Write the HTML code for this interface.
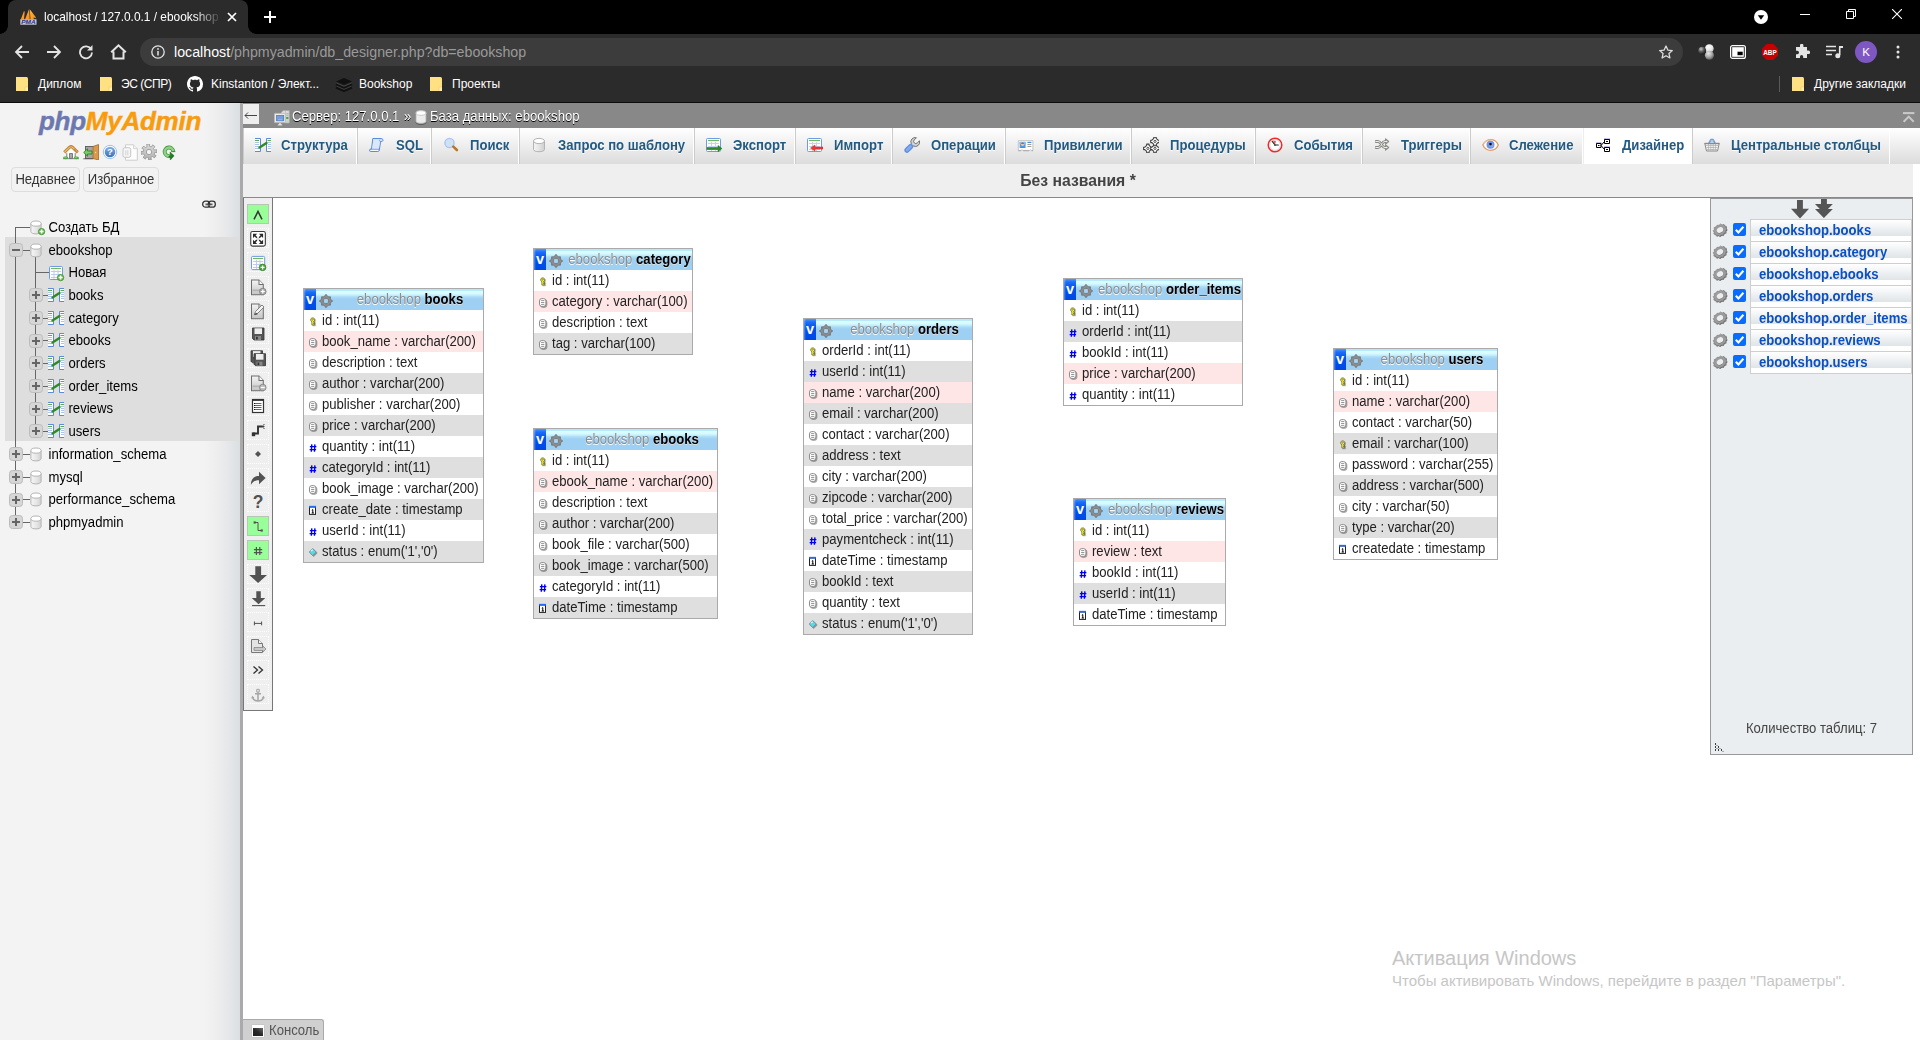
<!DOCTYPE html>
<html lang="ru"><head><meta charset="utf-8"><title>localhost / 127.0.0.1 / ebookshop</title>
<style>
html,body{margin:0;padding:0;width:1920px;height:1040px;overflow:hidden;background:#fff;font-family:"Liberation Sans",sans-serif;font-size:13.12px;color:#444}
*{box-sizing:border-box}
.abs{position:absolute}
svg{display:block}
.t{display:inline-block;line-height:1.1433em;transform:scaleY(1.065);transform-origin:0 .9177em;white-space:nowrap}
/* ---------- browser chrome ---------- */
#chrome{position:absolute;left:0;top:0;width:1920px;height:103px;background:#2b2b2b;color:#fff;font-family:"Liberation Sans",sans-serif;font-size:12px}
#tabstrip{position:absolute;left:0;top:0;width:1920px;height:34px;background:#000}
#tab{position:absolute;left:8px;top:0;width:240px;height:34px;background:#2b2b2b;border-radius:8px 8px 0 0}
#tab:before,#tab:after{content:"";position:absolute;bottom:0;width:8px;height:8px;background:radial-gradient(circle at 0 0,#000 7.5px,#2b2b2b 8px)}
#tab:before{left:-8px}
#tab:after{right:-8px;background:radial-gradient(circle at 100% 0,#000 7.5px,#2b2b2b 8px)}
#tabtitle{position:absolute;left:36px;top:9px;width:180px;height:16px;line-height:16px;white-space:nowrap;overflow:hidden;font-size:11.9px;-webkit-mask-image:linear-gradient(90deg,#000 150px,transparent 178px);mask-image:linear-gradient(90deg,#000 150px,transparent 178px)}
#omni{position:absolute;left:140px;top:38px;width:1543px;height:28px;border-radius:14px;background:#3c3c3c}
#url{position:absolute;left:34px;top:4px;line-height:20px;font-size:14.22px;color:#9a9a9a;white-space:nowrap}
#url b{font-weight:normal;color:#fff}
.bm{position:absolute;top:76px;height:16px;line-height:16px;white-space:nowrap;color:#fff;font-size:12px}
#chromeline{position:absolute;left:0;top:102px;width:1920px;height:1px;background:#0c0c0c}
/* ---------- pma navigation ---------- */
#nav{position:absolute;left:0;top:103px;width:240px;height:937px;background:linear-gradient(90deg,#f3f3f3 0,#f3f3f3 204px,#ededed 218px,#e6e8ea 227px,#dcdfe2 240px);color:#000}
#resizer{position:absolute;left:240px;top:103px;width:3px;height:937px;background:#aaa}
#logo{position:absolute;left:0;top:.5px;width:240px;text-align:center;font-weight:bold;font-style:italic;font-size:26px;line-height:34px;letter-spacing:-.25px;-webkit-text-stroke:.45px currentColor;color:#f89c0e;white-space:nowrap}
#logo span{color:#6c78af;-webkit-text-stroke:.45px #6c78af}
.nbtn{position:absolute;top:64px;height:25px;border:1px solid #ddd;border-radius:4px;background:#f2f2f2;color:#333;line-height:23px;text-align:center;font-size:13.12px}
#hl{position:absolute;left:5px;top:134px;width:235px;height:204px;background:#dedede}
.trow{position:absolute;left:0;height:23px;line-height:22.69px;white-space:nowrap;color:#000;transform:scaleY(1.065);transform-origin:0 15.900px}
.tline{position:absolute;background:#666}
.tbox{position:absolute;width:14px;height:14px;border:1px solid #bcbcbc;border-radius:3.500px;background:#d6d6d6}
.tbox i{position:absolute;left:2px;top:5px;width:8px;height:2px;background:#666}
.tbox b{position:absolute;left:5px;top:2px;width:2px;height:8px;background:#666}
/* ---------- main ---------- */
#serverinfo{position:absolute;left:243px;top:103px;width:1677px;height:25px;background:#888;color:#fff;text-shadow:0 1px 0 #000;white-space:nowrap}
#goback{position:absolute;left:0;top:1px;width:16px;height:20px;background:#eee}
#topmenu{position:absolute;left:243px;top:128px;width:1677px;height:36px;background:linear-gradient(#fff,#dcdcdc);border-bottom:0;white-space:nowrap;font-weight:bold;color:#235a81}
.tab{position:absolute;top:0;height:36px;border-left:1px solid #ccc;border-right:1px solid #fff;background:linear-gradient(#fff,#dcdcdc);text-shadow:0 1px 0 #fff;line-height:15px}
.tab.act{background:#fff;border-left-color:#eee}
.tab svg{position:absolute;left:11px;top:9px}
.tab span{position:absolute;left:37px;top:9.500px;white-space:nowrap;transform:scaleY(1.065);transform-origin:0 12px}
#namepanel{position:absolute;left:243px;top:164px;width:1670px;height:34px;background:#efefef;border-bottom:1px solid #888;text-align:center;font-weight:bold;font-size:15.74px;line-height:33px;color:#444}
/* ---------- designer ---------- */
#sidemenu{position:absolute;left:243px;top:198px;width:30px;height:513px;background:#efefef;border:1px solid #777;border-top:0}
.sb{position:absolute;left:3px;width:22px;height:20px;border:1px dotted #fff}
.sb.on{background:#9f9;border:1px solid #b4c8b4}
.sb svg{position:absolute;left:2px;top:1px;overflow:visible}
.dt{position:absolute;border:1px solid #aaa;background:#fff;color:#222;white-space:nowrap}
.dt .hd{position:relative;height:21px;background:linear-gradient(#b4e7fb 0,#b8eafb 1.500px,#dcfdff 2.200px,#d6faff 4.500px,#c6f0fc 6px,#b0e0f8 7.500px,#a3d5f5 9px,#9dd0f3 10.200px,#9dd0f3 100%);line-height:21px}
.dt .hd .v{position:absolute;left:0;top:0;width:12px;height:21px;background:linear-gradient(90deg,rgba(255,255,255,.35) 0,rgba(255,255,255,0) 2px),linear-gradient(#4f98ff 0,#1c6ef8 3px,#0052ee 9px,#0048e2 100%);color:#fff;font-weight:bold;font-size:14.5px;line-height:20px;text-align:center}
.dt .hd .g{position:absolute;left:15px;top:4.500px}
.dt .hd .nm{position:absolute;left:33px;right:0;top:0;text-align:center;color:#8e8e8e;text-shadow:0 1px 0 #fff;font-size:13.12px;transform:scaleY(1.065);transform-origin:0 15px}
.dt .hd .nm b{color:#000;text-shadow:0 1px 0 #ddd}
.dt .r{position:relative;height:21px;line-height:21px;padding-left:18px}
.dt .r.e{background:#dfdfdf}
.dt .r.p{background:#ffe6e6}
.dt .r svg{position:absolute;left:4px;top:5px}
#layer{position:absolute;left:1710px;top:198px;width:203px;height:557px;background:#eaeef0;border:1px solid #999;color:#444}
.lrow{position:absolute;left:0;width:201px;height:23px}
.lname{position:absolute;left:39px;top:0;width:162px;height:23px;border:1px solid #cfcfcf;background:linear-gradient(#fff 0,#f3f5f6 6px,#dfe4e7 16px,#fff 16.5px,#fff 100%);color:#0b4fc0;font-weight:bold;line-height:21.500px;padding-left:8px;white-space:nowrap;overflow:hidden}
.cb{position:absolute;left:22px;top:4px;width:13px;height:13px;border-radius:2px;background:#0a6cff}
#console{position:absolute;left:243px;top:1019px;width:81px;height:21px;background:#d0d0d0;border:1px solid #aaa;border-bottom:0;border-left:0;border-radius:0 3px 0 0;color:#555;line-height:21px}
#wm1{position:absolute;left:1392px;top:945px;font-size:20px;line-height:26px;color:#c6c6c6;white-space:nowrap}
#wm2{position:absolute;left:1392px;top:971px;font-size:15px;line-height:20px;color:#c6c6c6;white-space:nowrap}
</style></head><body>
<div id="chrome"><div id="tabstrip"></div><div id="tab"><div class="abs" style="left:12px;top:8px"><svg width="17" height="17" viewBox="0 0 17 17" style=""><defs><linearGradient id="sg" x1="0" y1="0" x2="1" y2="1"><stop offset="0" stop-color="#ffb84a"/><stop offset="1" stop-color="#f78a0c"/></linearGradient></defs>
<path d="M.8 11.500L3.900 3.200 4.700 3.500 4 11.500z" fill="url(#sg)"/><path d="M5 11.500L9.200 .8 9.800 11.500z" fill="url(#sg)"/><path d="M9.800 1.500C12.500 4.500 15 8 16.300 10.200L13.500 9.500 14 11.500H10.500z" fill="url(#sg)"/>
<rect x=".3" y="11.300" width="16.200" height="5.400" fill="#c9cbe2"/><text x="8.400" y="16.300" text-anchor="middle" font-family="Liberation Sans,sans-serif" font-size="6.200" font-weight="bold" font-style="italic" fill="#2c3178" textLength="14.500" lengthAdjust="spacingAndGlyphs">PMA</text></svg></div><div id="tabtitle">localhost / 127.0.0.1 / ebookshop</div><div class="abs" style="left:219px;top:12px"><svg width="10" height="10" viewBox="0 0 10 10" style=""><path d="M1 1l8 8M9 1l-8 8" stroke="#fff" stroke-width="1.700"/></svg></div></div><div class="abs" style="left:264px;top:11px"><svg width="12" height="12" viewBox="0 0 12 12" style=""><path d="M6 0v12M0 6h12" stroke="#fff" stroke-width="2"/></svg></div><div class="abs" style="left:1754px;top:10px"><svg width="14" height="14" viewBox="0 0 14 14" style=""><circle cx="7" cy="7" r="7" fill="#fff"/><path d="M3.800 5.300h6.400L7 9.800z" fill="#000"/></svg></div><div class="abs" style="left:1800px;top:14px;width:10px;height:1px;background:#fff"></div><div class="abs" style="left:1846px;top:9px"><svg width="10" height="10" viewBox="0 0 10 10" style=""><path d="M.5 2.500h7v7h-7z" fill="none" stroke="#fff"/><path d="M2.500 2v-1.500h7v7H8" fill="none" stroke="#fff"/></svg></div><div class="abs" style="left:1892px;top:9px"><svg width="10" height="10" viewBox="0 0 10 10" style=""><path d="M0 0l10 10M10 0L0 10" stroke="#fff" stroke-width="1.100"/></svg></div><div class="abs" style="left:14px;top:44px"><svg width="16" height="16" viewBox="0 0 16 16" style=""><path d="M15 8H2.500M8 2L2 8l6 6" fill="none" stroke="#e4e4e4" stroke-width="1.800"/></svg></div><div class="abs" style="left:46px;top:44px"><svg width="16" height="16" viewBox="0 0 16 16" style=""><path d="M1 8h12.500M8 2l6 6-6 6" fill="none" stroke="#e4e4e4" stroke-width="1.800"/></svg></div><div class="abs" style="left:78px;top:44px"><svg width="16" height="16" viewBox="0 0 16 16" style=""><path d="M13.200 5.300A6 6 0 1 0 14 8.500" fill="none" stroke="#e4e4e4" stroke-width="1.800"/><path d="M14.500 1v5.500H9z" fill="#e4e4e4"/></svg></div><div class="abs" style="left:110px;top:43px"><svg width="17" height="17" viewBox="0 0 17 17" style=""><path d="M1.200 9.300L8.500 2.300l7.300 7M3.500 8.500V15.500h10V8.500" fill="none" stroke="#e4e4e4" stroke-width="2"/></svg></div><div id="omni"><div class="abs" style="left:11px;top:7px"><svg width="14" height="14" viewBox="0 0 14 14" style=""><circle cx="7" cy="7" r="6.200" fill="none" stroke="#e4e4e4" stroke-width="1.300"/><path d="M7 6v4.500" stroke="#e4e4e4" stroke-width="1.500"/><circle cx="7" cy="3.900" r=".9" fill="#e4e4e4"/></svg></div><div id="url"><b>localhost</b>/phpmyadmin/db_designer.php?db=ebookshop</div><div class="abs" style="left:1519px;top:7px"><svg width="14" height="14" viewBox="0 0 14 14" style=""><path d="M7 1l1.850 4.100 4.450.45-3.350 3 .95 4.400L7 10.700l-3.900 2.250.95-4.400-3.350-3 4.450-.45z" fill="none" stroke="#dcdcdc" stroke-width="1.300" stroke-linejoin="round"/></svg></div></div><div class="abs" style="left:1697px;top:43px"><svg width="18" height="18" viewBox="0 0 18 18" style=""><defs><radialGradient id="m1" cx=".35" cy=".3" r=".8"><stop offset="0" stop-color="#c4c4c4"/><stop offset=".45" stop-color="#5a5a5a"/><stop offset="1" stop-color="#0c0c0c"/></radialGradient><radialGradient id="m2" cx=".4" cy=".3" r=".8"><stop offset="0" stop-color="#fff"/><stop offset=".6" stop-color="#e4e4e4"/><stop offset="1" stop-color="#9a9a9a"/></radialGradient><radialGradient id="m3" cx=".4" cy=".3" r=".8"><stop offset="0" stop-color="#e8e8e8"/><stop offset=".5" stop-color="#a8a8a8"/><stop offset="1" stop-color="#484848"/></radialGradient></defs>
<circle cx="12.300" cy="5.600" r="4.400" fill="url(#m2)"/><circle cx="5.200" cy="7.600" r="3.900" fill="url(#m1)"/><circle cx="12.400" cy="12.300" r="4.500" fill="url(#m3)"/></svg></div><div class="abs" style="left:1730px;top:45px"><svg width="16" height="14" viewBox="0 0 16 14" style=""><rect x=".6" y=".6" width="14.800" height="12.800" rx="2" fill="none" stroke="#fff" stroke-width="1.200"/><rect x="2.200" y="2.200" width="11.600" height="9.600" fill="#fff"/><rect x="7.500" y="6.700" width="5.200" height="3.500" fill="#000"/></svg></div><div class="abs" style="left:1762px;top:44px"><svg width="16" height="16" viewBox="0 0 16 16" style=""><path d="M4.700 0h6.600L16 4.700v6.600L11.300 16H4.700L0 11.300V4.700z" fill="#c80000"/><text x="8" y="10.500" text-anchor="middle" font-family="Liberation Sans,sans-serif" font-size="7" textLength="13.500" lengthAdjust="spacingAndGlyphs" font-weight="bold" fill="#fff">ABP</text></svg></div><div class="abs" style="left:1794px;top:44px"><svg width="16" height="16" viewBox="0 0 16 16" style=""><path d="M6 1.500a1.700 1.700 0 0 1 3.400 0V3H13v3.600h1.300a1.750 1.750 0 0 1 0 3.500H13V14H9.200v-1.300a1.600 1.600 0 0 0-3.200 0V14H2V10.200h1.300a1.700 1.700 0 0 0 0-3.400H2V3h4z" fill="#e4e4e4"/></svg></div><div class="abs" style="left:1826px;top:45px"><svg width="17" height="14" viewBox="0 0 17 14" style=""><path d="M0 1.500h10M0 5.500h10M0 9.500h6" stroke="#e4e4e4" stroke-width="1.700"/><path d="M13.700 1.500v8.500" stroke="#e4e4e4" stroke-width="1.600"/><path d="M13 1h4v2h-4z" fill="#e4e4e4"/><circle cx="11.800" cy="10.800" r="2.500" fill="#e4e4e4"/></svg></div><div class="abs" style="left:1855px;top:41px"><svg width="22" height="22" viewBox="0 0 22 22" style=""><circle cx="11" cy="11" r="11" fill="#7e57c2"/><text x="11" y="15" text-anchor="middle" font-family="Liberation Sans,sans-serif" font-size="11.500" fill="#fff">K</text></svg></div><div class="abs" style="left:1896px;top:45px"><svg width="4" height="14" viewBox="0 0 4 14" style=""><circle cx="2" cy="2" r="1.500" fill="#e4e4e4"/><circle cx="2" cy="7" r="1.500" fill="#e4e4e4"/><circle cx="2" cy="12" r="1.500" fill="#e4e4e4"/></svg></div><div class="abs" style="left:13px;top:76px"><svg width="16" height="16" viewBox="0 0 16 16" style=""><path d="M3 1h10.500a1.500 1.500 0 0 1 1.500 1.500V15H3z" fill="#ffe082"/><path d="M12 11h3v4h-3z" fill="#ffecb3"/><path d="M12 11h3M12 11v4" stroke="#f5c95a" stroke-width=".6" fill="none"/></svg></div><div class="bm" style="left:38px">Диплом</div><div class="abs" style="left:97px;top:76px"><svg width="16" height="16" viewBox="0 0 16 16" style=""><path d="M3 1h10.500a1.500 1.500 0 0 1 1.500 1.500V15H3z" fill="#ffe082"/><path d="M12 11h3v4h-3z" fill="#ffecb3"/><path d="M12 11h3M12 11v4" stroke="#f5c95a" stroke-width=".6" fill="none"/></svg></div><div class="bm" style="left:121px;letter-spacing:-.45px">ЭС (СПР)</div><div class="abs" style="left:187px;top:76px"><svg width="16" height="16" viewBox="0 0 16 16" style=""><path fill="#fff" d="M8 0C3.580 0 0 3.580 0 8c0 3.540 2.290 6.530 5.470 7.590.4.070.55-.17.550-.38 0-.19-.01-.82-.01-1.490-2.010.37-2.530-.49-2.690-.94-.09-.23-.48-.94-.82-1.130-.28-.15-.68-.52-.01-.53.630-.01 1.080.58 1.230.82.720 1.210 1.870.87 2.330.66.070-.52.280-.87.510-1.070-1.780-.2-3.640-.89-3.640-3.950 0-.87.310-1.590.82-2.150-.08-.2-.36-1.020.08-2.120 0 0 .67-.21 2.200.82.640-.18 1.320-.27 2-.27s1.360.09 2 .27c1.530-1.040 2.200-.82 2.200-.82.440 1.100.16 1.920.08 2.120.51.560.82 1.270.82 2.150 0 3.070-1.870 3.750-3.650 3.950.29.250.54.730.54 1.480 0 1.070-.01 1.930-.01 2.200 0 .21.150.46.550.38A8.013 8.013 0 0 0 16 8c0-4.420-3.580-8-8-8z"/></svg></div><div class="bm" style="left:211px">Kinstanton / Элект...</div><div class="abs" style="left:335px;top:76px"><svg width="18" height="16" viewBox="0 0 18 16" style=""><path d="M1 5.500L9 2l8 3.500-8 3.500z" fill="#111"/><path d="M1 8.500L9 12l8-3.500M1 11.500L9 15l8-3.500" fill="none" stroke="#111" stroke-width="2.200"/><path d="M1.500 7L9 10.300 16.500 7M1.500 10L9 13.300 16.500 10" fill="none" stroke="#555" stroke-width=".6"/></svg></div><div class="bm" style="left:359px">Bookshop</div><div class="abs" style="left:427px;top:76px"><svg width="16" height="16" viewBox="0 0 16 16" style=""><path d="M3 1h10.500a1.500 1.500 0 0 1 1.500 1.500V15H3z" fill="#ffe082"/><path d="M12 11h3v4h-3z" fill="#ffecb3"/><path d="M12 11h3M12 11v4" stroke="#f5c95a" stroke-width=".6" fill="none"/></svg></div><div class="bm" style="left:452px">Проекты</div><div class="abs" style="left:1779px;top:76px;width:1px;height:16px;background:#5a5a5a"></div><div class="abs" style="left:1789px;top:76px"><svg width="16" height="16" viewBox="0 0 16 16" style=""><path d="M3 1h10.500a1.500 1.500 0 0 1 1.500 1.500V15H3z" fill="#ffe082"/><path d="M12 11h3v4h-3z" fill="#ffecb3"/><path d="M12 11h3M12 11v4" stroke="#f5c95a" stroke-width=".6" fill="none"/></svg></div><div class="bm" style="left:1814px">Другие закладки</div><div id="chromeline"></div></div><div id="nav"><div id="logo"><span>php</span>MyAdmin</div><div class="abs" style="left:63px;top:41px"><svg width="16" height="16" viewBox="0 0 16 16" style=""><path d="M3.800 8v6.200h8.400V8L8 4.200z" fill="#fff"/><path d="M3.800 9.200v4.500M12.200 9.200v4.500" stroke="#6e6e6e" stroke-width=".9"/><rect x="6.600" y="9.600" width="2.800" height="4.700" fill="#a9a9a9" stroke="#666" stroke-width=".8"/><path d="M1.300 8.300L6.600 3.200Q8 2 9.400 3.200L14.700 8.300" fill="none" stroke="#c2812f" stroke-width="3.100" stroke-linejoin="round"/><path d="M1.600 8L6.800 3.200Q8 2.200 9.200 3.200L14.400 8" fill="none" stroke="#e8c088" stroke-width="1.100"/><path d="M11 5l3.700 3.300" stroke="#a8621f" stroke-width="1" opacity=".6"/><path d="M0 14.700h16" stroke="#6a6a6a" stroke-width=".8"/><ellipse cx="2.700" cy="13.800" rx="2.600" ry="1.400" fill="#4ea83e"/><ellipse cx="13.300" cy="13.800" rx="2.600" ry="1.400" fill="#4ea83e"/><ellipse cx="2.500" cy="13.400" rx="1.600" ry=".7" fill="#76c765"/><ellipse cx="13" cy="13.400" rx="1.600" ry=".7" fill="#76c765"/></svg></div><div class="abs" style="left:83px;top:41px"><svg width="16" height="16" viewBox="0 0 16 16" style=""><rect x="2.500" y="2.500" width="8" height="12" fill="#a6a4a8" stroke="#5a5a5a" stroke-width=".9"/><path d="M.3 14.800h10" stroke="#5a5a5a" stroke-width=".9"/><path d="M10 2.500l5.500-2v15.500l-5.500-1.500z" fill="#d79a4e" stroke="#a86a22" stroke-width=".8"/><circle cx="12.500" cy="8.500" r=".7" fill="#ffe36a"/><path d="M9 7h-4.500V4.800L.7 8.500l3.800 3.700V10H9z" fill="#7dca6c" stroke="#2e8424" stroke-width=".9"/></svg></div><div class="abs" style="left:102px;top:41px"><svg width="16" height="16" viewBox="0 0 16 16" style=""><defs><linearGradient id="hg" x1="0" y1="0" x2="0" y2="1"><stop offset="0" stop-color="#82b0e6"/><stop offset="1" stop-color="#3c6fb4"/></linearGradient></defs><circle cx="8" cy="8" r="6.700" fill="#fff" stroke="#9dc0ee" stroke-width="1"/><circle cx="8" cy="8" r="5.300" fill="url(#hg)"/><text x="8" y="11.300" text-anchor="middle" font-family="Liberation Sans,sans-serif" font-weight="bold" font-size="9.500" fill="#fff">?</text></svg></div><div class="abs" style="left:122px;top:41px"><svg width="17" height="17" viewBox="0 0 17 17" style=""><path d="M3.500 .8h8l3.800 3.800v11.600H3.500z" fill="#fdfdfd" stroke="#cdcdcd"/><path d="M11.500 .8v3.800h3.800" fill="#f2f2f2" stroke="#d6d6d6"/><rect x="1" y="3.700" width="7.700" height="9.600" rx="1.800" fill="#f6f6f6" stroke="#c6c6c6"/><path d="M3.800 6.200v5M5.800 6.200v5" stroke="#d6d6d6" stroke-width="1.100"/></svg></div><div class="abs" style="left:141px;top:41px"><svg width="16" height="16" viewBox="0 0 16 16" style=""><defs><linearGradient id="gg" x1="0" y1="0" x2="0" y2="1"><stop offset="0" stop-color="#dcdcdc"/><stop offset="1" stop-color="#b0b0b0"/></linearGradient></defs><path d="M15.60 5.51 L15.98 8.59 L13.74 8.44 L13.14 10.59 L15.14 11.62 L13.23 14.06 L11.75 12.37 L9.81 13.47 L10.49 15.60 L7.41 15.98 L7.56 13.74 L5.41 13.14 L4.38 15.14 L1.94 13.23 L3.63 11.75 L2.53 9.81 L0.40 10.49 L0.02 7.41 L2.26 7.56 L2.86 5.41 L0.86 4.38 L2.77 1.94 L4.25 3.63 L6.19 2.53 L5.51 0.40 L8.59 0.02 L8.44 2.26 L10.59 2.86 L11.62 0.86 L14.06 2.77 L12.37 4.25 L13.47 6.19Z" fill="url(#gg)" stroke="#8d8d8d" stroke-width=".7"/><circle cx="8" cy="8" r="2.700" fill="#f3f3f3" stroke="#909090" stroke-width=".8"/></svg></div><div class="abs" style="left:161px;top:41px"><svg width="16" height="16" viewBox="0 0 16 16" style=""><path d="M12.280 7.430A4.300 4.300 0 1 0 9.110 11.950" fill="none" stroke="#3f9c3a" stroke-width="3.900"/><path d="M12.280 7.430A4.300 4.300 0 1 0 9.110 11.950" fill="none" stroke="#93d08a" stroke-width="2.300"/><path d="M10.300 7.600h4" stroke="#2a8428" stroke-width=".9"/><path d="M9 7.900l4.100 3.900-3.700 4.100-.3-2.600-1.500-.6 1.700-1.500z" fill="#1f7d22" stroke="#136416" stroke-width=".5" stroke-linejoin="round"/></svg></div><div class="nbtn" style="left:11px;width:69px"><span class="t">Недавнее</span></div><div class="nbtn" style="left:83px;width:76px"><span class="t">Избранное</span></div><div class="abs" style="left:202px;top:97px"><svg width="14" height="9" viewBox="0 0 14 9" style=""><rect x=".7" y="1.200" width="7" height="6" rx="2.800" fill="none" stroke="#333" stroke-width="1.300"/><rect x="6.300" y="1.200" width="7" height="6" rx="2.800" fill="none" stroke="#333" stroke-width="1.300"/><path d="M3.500 4.200h7" stroke="#333" stroke-width="1.200"/><path d="M3.500 5.300h7" stroke="#999" stroke-width=".6"/></svg></div><div id="hl"></div><div class="tline" style="left:15px;top:124.0px;width:1px;height:295.0px"></div><div class="tline" style="left:15px;top:124.0px;width:15px;height:1px"></div><div class="tline" style="left:35px;top:153.7px;width:1px;height:174.5px"></div><div class="tline" style="left:35px;top:169.4px;width:14px;height:1px"></div><div class="abs" style="left:30px;top:117px"><svg width="16" height="16" viewBox="0 0 16 16" style=""><defs><linearGradient id="dg" x1="0" x2="1"><stop offset="0" stop-color="#f6f6f6"/><stop offset=".55" stop-color="#e6e6e6"/><stop offset="1" stop-color="#d0d0d0"/></linearGradient></defs><path d="M.9 3.600v8c0 1.500 2.300 2.300 5.100 2.300s5.100-.8 5.100-2.300v-8" fill="url(#dg)" stroke="#b4b4b4"/><ellipse cx="6" cy="3.600" rx="5.100" ry="2.600" fill="#fff" stroke="#b4b4b4"/><circle cx="11.600" cy="11.600" r="3.200" fill="#5fb84c" stroke="#3c922d" stroke-width=".7"/><path d="M9.600 11.600h4M11.600 9.600v4" stroke="#fff" stroke-width="1.500"/></svg></div><div class="trow" style="left:48.5px;top:113.95px">Создать БД</div><div class="tline" style="left:23px;top:146.7px;width:7px;height:1px"></div><div class="tbox" style="left:9px;top:139.9px"><i></i></div><div class="abs" style="left:30px;top:140px"><svg width="16" height="16" viewBox="0 0 16 16" style=""><defs><linearGradient id="dg" x1="0" x2="1"><stop offset="0" stop-color="#f6f6f6"/><stop offset=".55" stop-color="#e6e6e6"/><stop offset="1" stop-color="#d0d0d0"/></linearGradient></defs><path d="M.9 3.600v8c0 1.500 2.300 2.300 5.100 2.300s5.100-.8 5.100-2.300v-8" fill="url(#dg)" stroke="#b4b4b4"/><ellipse cx="6" cy="3.600" rx="5.100" ry="2.600" fill="#fff" stroke="#b4b4b4"/></svg></div><div class="trow" style="left:48.5px;top:136.65px">ebookshop</div><div class="abs" style="left:49px;top:163px"><svg width="16" height="16" viewBox="0 0 16 16" style=""><rect x=".5" y=".5" width="13" height="13" rx="1" fill="#fff" stroke="#6f9be0"/><path d="M2 2.500h10" stroke="#6db95b"/><path d="M2 5.500h10M2 8.500h10M2 11.500h10M5 4v9M9 4v9" stroke="#b9cdf0"/><circle cx="11.600" cy="11.600" r="3.200" fill="#5fb84c" stroke="#3c922d" stroke-width=".7"/><path d="M9.600 11.600h4M11.600 9.600v4" stroke="#fff" stroke-width="1.500"/></svg></div><div class="trow" style="left:68.5px;top:159.34px">Новая</div><div class="tline" style="left:43px;top:192.1px;width:5px;height:1px"></div><div class="tbox" style="left:29px;top:185.3px"><i></i><b></b></div><div class="abs" style="left:48px;top:184px"><svg width="16" height="16" viewBox="0 0 16 16" style=""><path d="M0 1.5h5.5v13H0M16 1.5h-4.5v13H16" fill="#fff" stroke="#5a8ad8" stroke-width="1"/>
<path d="M0 3.5h4M12.5 3.5H16" stroke="#5caa4a"/><path d="M0 5.5h4M0 7.5h4M0 9.5h4M0 11.5h4M13 5.5h3M13 7.5h3M13 9.5h3M13 11.5h3" stroke="#a9c3ee"/>
<path d="M4.5 10.5L11.5 6" stroke="#2f8a24" stroke-width="2.4" stroke-linecap="round"/></svg></div><div class="trow" style="left:68.5px;top:182.03px">books</div><div class="tline" style="left:43px;top:214.8px;width:5px;height:1px"></div><div class="tbox" style="left:29px;top:208.0px"><i></i><b></b></div><div class="abs" style="left:48px;top:207px"><svg width="16" height="16" viewBox="0 0 16 16" style=""><path d="M0 1.5h5.5v13H0M16 1.5h-4.5v13H16" fill="#fff" stroke="#5a8ad8" stroke-width="1"/>
<path d="M0 3.5h4M12.5 3.5H16" stroke="#5caa4a"/><path d="M0 5.5h4M0 7.5h4M0 9.5h4M0 11.5h4M13 5.5h3M13 7.5h3M13 9.5h3M13 11.5h3" stroke="#a9c3ee"/>
<path d="M4.5 10.5L11.5 6" stroke="#2f8a24" stroke-width="2.4" stroke-linecap="round"/></svg></div><div class="trow" style="left:68.5px;top:204.72px">category</div><div class="tline" style="left:43px;top:237.4px;width:5px;height:1px"></div><div class="tbox" style="left:29px;top:230.6px"><i></i><b></b></div><div class="abs" style="left:48px;top:229px"><svg width="16" height="16" viewBox="0 0 16 16" style=""><path d="M0 1.5h5.5v13H0M16 1.5h-4.5v13H16" fill="#fff" stroke="#5a8ad8" stroke-width="1"/>
<path d="M0 3.5h4M12.5 3.5H16" stroke="#5caa4a"/><path d="M0 5.5h4M0 7.5h4M0 9.5h4M0 11.5h4M13 5.5h3M13 7.5h3M13 9.5h3M13 11.5h3" stroke="#a9c3ee"/>
<path d="M4.5 10.5L11.5 6" stroke="#2f8a24" stroke-width="2.4" stroke-linecap="round"/></svg></div><div class="trow" style="left:68.5px;top:227.41px">ebooks</div><div class="tline" style="left:43px;top:260.1px;width:5px;height:1px"></div><div class="tbox" style="left:29px;top:253.3px"><i></i><b></b></div><div class="abs" style="left:48px;top:252px"><svg width="16" height="16" viewBox="0 0 16 16" style=""><path d="M0 1.5h5.5v13H0M16 1.5h-4.5v13H16" fill="#fff" stroke="#5a8ad8" stroke-width="1"/>
<path d="M0 3.5h4M12.5 3.5H16" stroke="#5caa4a"/><path d="M0 5.5h4M0 7.5h4M0 9.5h4M0 11.5h4M13 5.5h3M13 7.5h3M13 9.5h3M13 11.5h3" stroke="#a9c3ee"/>
<path d="M4.5 10.5L11.5 6" stroke="#2f8a24" stroke-width="2.4" stroke-linecap="round"/></svg></div><div class="trow" style="left:68.5px;top:250.09px">orders</div><div class="tline" style="left:43px;top:282.8px;width:5px;height:1px"></div><div class="tbox" style="left:29px;top:276.0px"><i></i><b></b></div><div class="abs" style="left:48px;top:275px"><svg width="16" height="16" viewBox="0 0 16 16" style=""><path d="M0 1.5h5.5v13H0M16 1.5h-4.5v13H16" fill="#fff" stroke="#5a8ad8" stroke-width="1"/>
<path d="M0 3.5h4M12.5 3.5H16" stroke="#5caa4a"/><path d="M0 5.5h4M0 7.5h4M0 9.5h4M0 11.5h4M13 5.5h3M13 7.5h3M13 9.5h3M13 11.5h3" stroke="#a9c3ee"/>
<path d="M4.5 10.5L11.5 6" stroke="#2f8a24" stroke-width="2.4" stroke-linecap="round"/></svg></div><div class="trow" style="left:68.5px;top:272.79px">order_items</div><div class="tline" style="left:43px;top:305.5px;width:5px;height:1px"></div><div class="tbox" style="left:29px;top:298.7px"><i></i><b></b></div><div class="abs" style="left:48px;top:298px"><svg width="16" height="16" viewBox="0 0 16 16" style=""><path d="M0 1.5h5.5v13H0M16 1.5h-4.5v13H16" fill="#fff" stroke="#5a8ad8" stroke-width="1"/>
<path d="M0 3.5h4M12.5 3.5H16" stroke="#5caa4a"/><path d="M0 5.5h4M0 7.5h4M0 9.5h4M0 11.5h4M13 5.5h3M13 7.5h3M13 9.5h3M13 11.5h3" stroke="#a9c3ee"/>
<path d="M4.5 10.5L11.5 6" stroke="#2f8a24" stroke-width="2.4" stroke-linecap="round"/></svg></div><div class="trow" style="left:68.5px;top:295.47px">reviews</div><div class="tline" style="left:43px;top:328.2px;width:5px;height:1px"></div><div class="tbox" style="left:29px;top:321.4px"><i></i><b></b></div><div class="abs" style="left:48px;top:320px"><svg width="16" height="16" viewBox="0 0 16 16" style=""><path d="M0 1.5h5.5v13H0M16 1.5h-4.5v13H16" fill="#fff" stroke="#5a8ad8" stroke-width="1"/>
<path d="M0 3.5h4M12.5 3.5H16" stroke="#5caa4a"/><path d="M0 5.5h4M0 7.5h4M0 9.5h4M0 11.5h4M13 5.5h3M13 7.5h3M13 9.5h3M13 11.5h3" stroke="#a9c3ee"/>
<path d="M4.5 10.5L11.5 6" stroke="#2f8a24" stroke-width="2.4" stroke-linecap="round"/></svg></div><div class="trow" style="left:68.5px;top:318.17px">users</div><div class="tline" style="left:23px;top:350.9px;width:7px;height:1px"></div><div class="tbox" style="left:9px;top:344.1px"><i></i><b></b></div><div class="abs" style="left:30px;top:344px"><svg width="16" height="16" viewBox="0 0 16 16" style=""><defs><linearGradient id="dg" x1="0" x2="1"><stop offset="0" stop-color="#f6f6f6"/><stop offset=".55" stop-color="#e6e6e6"/><stop offset="1" stop-color="#d0d0d0"/></linearGradient></defs><path d="M.9 3.600v8c0 1.500 2.300 2.300 5.100 2.300s5.100-.8 5.100-2.300v-8" fill="url(#dg)" stroke="#b4b4b4"/><ellipse cx="6" cy="3.600" rx="5.100" ry="2.600" fill="#fff" stroke="#b4b4b4"/></svg></div><div class="trow" style="left:48.5px;top:340.85px">information_schema</div><div class="tline" style="left:23px;top:373.6px;width:7px;height:1px"></div><div class="tbox" style="left:9px;top:366.8px"><i></i><b></b></div><div class="abs" style="left:30px;top:367px"><svg width="16" height="16" viewBox="0 0 16 16" style=""><defs><linearGradient id="dg" x1="0" x2="1"><stop offset="0" stop-color="#f6f6f6"/><stop offset=".55" stop-color="#e6e6e6"/><stop offset="1" stop-color="#d0d0d0"/></linearGradient></defs><path d="M.9 3.600v8c0 1.500 2.300 2.300 5.100 2.300s5.100-.8 5.100-2.300v-8" fill="url(#dg)" stroke="#b4b4b4"/><ellipse cx="6" cy="3.600" rx="5.100" ry="2.600" fill="#fff" stroke="#b4b4b4"/></svg></div><div class="trow" style="left:48.5px;top:363.55px">mysql</div><div class="tline" style="left:23px;top:396.3px;width:7px;height:1px"></div><div class="tbox" style="left:9px;top:389.5px"><i></i><b></b></div><div class="abs" style="left:30px;top:389px"><svg width="16" height="16" viewBox="0 0 16 16" style=""><defs><linearGradient id="dg" x1="0" x2="1"><stop offset="0" stop-color="#f6f6f6"/><stop offset=".55" stop-color="#e6e6e6"/><stop offset="1" stop-color="#d0d0d0"/></linearGradient></defs><path d="M.9 3.600v8c0 1.500 2.300 2.300 5.100 2.300s5.100-.8 5.100-2.300v-8" fill="url(#dg)" stroke="#b4b4b4"/><ellipse cx="6" cy="3.600" rx="5.100" ry="2.600" fill="#fff" stroke="#b4b4b4"/></svg></div><div class="trow" style="left:48.5px;top:386.24px">performance_schema</div><div class="tline" style="left:23px;top:419.0px;width:7px;height:1px"></div><div class="tbox" style="left:9px;top:412.2px"><i></i><b></b></div><div class="abs" style="left:30px;top:412px"><svg width="16" height="16" viewBox="0 0 16 16" style=""><defs><linearGradient id="dg" x1="0" x2="1"><stop offset="0" stop-color="#f6f6f6"/><stop offset=".55" stop-color="#e6e6e6"/><stop offset="1" stop-color="#d0d0d0"/></linearGradient></defs><path d="M.9 3.600v8c0 1.500 2.300 2.300 5.100 2.300s5.100-.8 5.100-2.300v-8" fill="url(#dg)" stroke="#b4b4b4"/><ellipse cx="6" cy="3.600" rx="5.100" ry="2.600" fill="#fff" stroke="#b4b4b4"/></svg></div><div class="trow" style="left:48.5px;top:408.93px">phpmyadmin</div></div><div id="resizer"></div><div id="serverinfo"><div id="goback"><div class="abs" style="left:1px;top:7px"><svg width="13" height="9" viewBox="0 0 13 9" style=""><path d="M1 4.500h12M4 1.500L1 4.500l3 3" fill="none" stroke="#444" stroke-width="1"/></svg></div></div><div class="abs" style="left:31px;top:7px"><svg width="16" height="16" viewBox="0 0 16 16" style=""><path d="M6.500 3.500L9 .5h6.300V13H11" fill="#dcdcdc" stroke="#a8a8a8" stroke-width=".8"/><path d="M11.600 1v12" stroke="#bdbdbd" stroke-width=".8"/><path d="M12.300 3.600h2.200M12.300 5.300h2.200" stroke="#a9a9a9" stroke-width=".9"/><rect x="12.200" y="6.900" width="2.200" height="2.200" fill="#3cae2e"/><path d="M12.800 10v2.500M13.900 10v2.500" stroke="#c4c4d4" stroke-width=".7"/>
<rect x=".4" y="3.400" width="11" height="9.200" rx=".6" fill="#ebebeb" stroke="#b9b9b9" stroke-width=".8"/><rect x="2.100" y="5" width="8" height="6.200" fill="#5a82c6"/><rect x="3" y="5.800" width="6.200" height="4.600" fill="#789fd8"/><path d="M4 9.700h4.300" stroke="#a9c3ea" stroke-width=".7"/><path d="M3.800 15.200L6 12.700l2.200 2.500z" fill="#e9e9e9" stroke="#cfcfcf" stroke-width=".5"/></svg></div><div class="abs" style="left:49px;top:5px;line-height:18px"><span class="t">Сервер: 127.0.0.1</span></div><div class="abs" style="left:161px;top:5px;line-height:18px"><span class="t">»</span></div><div class="abs" style="left:172px;top:7px"><svg width="12" height="14" viewBox="0 0 12 14" style="filter:drop-shadow(0 1px 0 #555)"><path d="M1 3v8.500c0 1 2 1.800 5 1.800s5-.8 5-1.800V3" fill="#ececec" stroke="#bdbdbd"/><ellipse cx="6" cy="3" rx="5" ry="2.300" fill="#fff" stroke="#c8c8c8"/></svg></div><div class="abs" style="left:187px;top:5px;line-height:18px"><span class="t">База данных: ebookshop</span></div><div class="abs" style="left:1660px;top:9px"><svg width="12" height="12" viewBox="0 0 12 12" style=""><path d="M0 1.100h11.400" stroke="#c8c8c8" stroke-width="2.100"/><path d="M.7 9.800l5-5.200 5 5.200" fill="none" stroke="#c8c8c8" stroke-width="2"/></svg></div></div><div id="topmenu"><div class="tab" style="left:0px;width:114px"><svg width="16" height="16" viewBox="0 0 16 16" style=""><path d="M0 1.5h5.5v13H0M16 1.5h-4.5v13H16" fill="#fff" stroke="#5a8ad8" stroke-width="1"/>
<path d="M0 3.5h4M12.5 3.5H16" stroke="#5caa4a"/><path d="M0 5.5h4M0 7.5h4M0 9.5h4M0 11.5h4M13 5.5h3M13 7.5h3M13 9.5h3M13 11.5h3" stroke="#a9c3ee"/>
<path d="M4.5 10.5L11.5 6" stroke="#2f8a24" stroke-width="2.4" stroke-linecap="round"/></svg><span>Структура</span></div><div class="tab" style="left:114px;width:74px"><svg width="16" height="16" viewBox="0 0 16 16" style=""><path d="M3.800 1.500h8.400c2.200 0 2.400 3 .3 3h-.9l-1.300 8.600c-.2 1.400-1.200 1.400-2.300 1.400H1.600c-1.600 0-1.500-2.400 0-2.400h.9z" fill="#cfe0f8" stroke="#5b8ad6" stroke-width="1" stroke-linejoin="round"/><path d="M4.600 2.500h6.600l-1.400 9.300H3.200z" fill="#dbe8fb"/><path d="M1.300 12.300h8.200c.5 0 .7.500.6 1.200" fill="none" stroke="#5b8ad6" stroke-width=".9"/><path d="M2 12.800h7.300v1H2z" fill="#fff"/><path d="M11.600 4.500c-1 0-1.300-.9-1-1.700" fill="none" stroke="#5b8ad6" stroke-width=".8"/></svg><span style="left:38px">SQL</span></div><div class="tab" style="left:188px;width:88px"><svg width="16" height="16" viewBox="0 0 16 16" style=""><circle cx="6.5" cy="6" r="4.6" fill="#cfe0f7" stroke="#a9c6ef" stroke-width="1.4"/><path d="M10.3 9.6l3.6 3.4" stroke="#b5772c" stroke-width="2.6" stroke-linecap="round"/></svg><span style="left:38px">Поиск</span></div><div class="tab" style="left:276px;width:175px"><svg width="16" height="16" viewBox="0 0 16 16" style=""><defs><linearGradient id="dbg" x1="0" x2="1"><stop offset="0" stop-color="#f4f4f4"/><stop offset=".5" stop-color="#e4e4e4"/><stop offset="1" stop-color="#cfcfcf"/></linearGradient></defs>
<path d="M2.5 4v8.5c0 1.4 2.5 2.2 5.5 2.2s5.5-.8 5.5-2.2V4" fill="url(#dbg)" stroke="#b4b4b4"/><ellipse cx="8" cy="4" rx="5.5" ry="2.6" fill="#fff" stroke="#b4b4b4"/></svg><span style="left:38px">Запрос по шаблону</span></div><div class="tab" style="left:451px;width:101px"><svg width="16" height="16" viewBox="0 0 16 16" style=""><rect x=".5" y="1.5" width="14" height="13" rx="1" fill="#fff" stroke="#6f9be0"/><path d="M2 3.5h11" stroke="#6db95b"/><path d="M2 6.5h11M2 9.5h11M2 12.5h11M5.5 5v9M9.5 5v9" stroke="#c3d4f2"/>
<path d="M1 10.5h11v-2l4 3-4 3v-2H1z" fill="#2e8b2a" stroke="#1f6b1c" stroke-width=".5"/></svg><span style="left:38px">Экспорт</span></div><div class="tab" style="left:552px;width:97px"><svg width="16" height="16" viewBox="0 0 16 16" style=""><rect x=".5" y="1.5" width="14" height="13" rx="1" fill="#fff" stroke="#6f9be0"/><path d="M2 3.5h11" stroke="#6db95b"/><path d="M2 6.5h11M2 9.5h11M2 12.5h11M5.5 5v9M9.5 5v9" stroke="#c3d4f2"/>
<path d="M16 10h-8v-2l-4.5 3 4.5 3v-2h8z" fill="#f03a3a" stroke="#d01c1c" stroke-width=".5"/></svg><span style="left:38px">Импорт</span></div><div class="tab" style="left:649px;width:113px"><svg width="16" height="16" viewBox="0 0 16 16" style=""><path d="M12.400 .75L10.300 2.850a1.900 1.900 0 0 0 3 3.050L15.450 3.800A4.300 4.300 0 0 1 9.200 8.900L7.200 10.900 5.200 8.900 7.300 6.800A4.300 4.300 0 0 1 12.400 .75z" fill="#d2d2d2" stroke="#666" stroke-width=".9" stroke-linejoin="round"/>
<path d="M3 13.200L6.600 9.600" stroke="#5d8ee0" stroke-width="5.200" stroke-linecap="round"/><path d="M3.100 13.100L6.500 9.700" stroke="#8eb2ee" stroke-width="2.600" stroke-linecap="round"/><path d="M3.200 13L6.400 9.800" stroke="#7ea6ea" stroke-width="1.200" stroke-linecap="round"/></svg><span style="left:38px">Операции</span></div><div class="tab" style="left:762px;width:126px"><svg width="17" height="16" viewBox="0 0 17 16" style=""><path d="M1.300 3.700h14.600v9.700h-1.600q-.9-1.300-1.800 0H5.900q-.9-1.300-1.800 0H1.300z" fill="#fff" stroke="#bdbdbd" stroke-width=".9"/><path d="M1.300 13.800h2.500M6.200 13.800h6M14.600 13.800h1.300" stroke="#9a9a9a" stroke-width=".7"/>
<rect x="2.600" y="4.900" width="6" height="6.100" fill="#4d9df0"/><rect x="2.600" y="4.900" width="6" height="2" fill="#7fc0ff"/><circle cx="5.600" cy="7.300" r="1.700" fill="#f3c49a"/><path d="M3.900 6.700q1.700-2.300 3.400 0z" fill="#8a4f1c"/><path d="M3 11q2.600-2.600 5.200 0z" fill="#3f8fe8"/>
<path d="M10.400 5.400h4" stroke="#3d86dc" stroke-width="1.100"/><path d="M10.400 7.500h4M10.400 9.500h4" stroke="#9d9d9d" stroke-width="1.100"/></svg><span style="left:38px">Привилегии</span></div><div class="tab" style="left:888px;width:124px"><svg width="16" height="16" viewBox="0 0 16 16" style=""><g transform="translate(4.9 11.4)"><path d="M-1.200-4.300h2.400v1.300l1.800 1.800h1.300v2.400h-1.300l-1.800 1.800v1.300h-2.400v-1.300l-1.800-1.800h-1.300v-2.400h1.300l1.800-1.800z" fill="#fff" stroke="#3d3d3d" stroke-width="1.050" stroke-linejoin="round"/><circle r="1.100" fill="#fff" stroke="#3d3d3d" stroke-width=".9"/></g><g transform="translate(12 11.4)"><path d="M-1.200-4.300h2.400v1.300l1.800 1.800h1.300v2.400h-1.300l-1.800 1.800v1.300h-2.400v-1.300l-1.800-1.800h-1.300v-2.400h1.300l1.800-1.800z" fill="#fff" stroke="#3d3d3d" stroke-width="1.050" stroke-linejoin="round"/><circle r="1.100" fill="#fff" stroke="#3d3d3d" stroke-width=".9"/></g><g transform="translate(12 4.4)"><path d="M-1.200-4.300h2.400v1.300l1.800 1.800h1.300v2.400h-1.300l-1.800 1.800v1.300h-2.400v-1.300l-1.800-1.800h-1.300v-2.400h1.300l1.800-1.800z" fill="#fff" stroke="#3d3d3d" stroke-width="1.050" stroke-linejoin="round"/><circle r="1.100" fill="#fff" stroke="#3d3d3d" stroke-width=".9"/></g></svg><span style="left:38px">Процедуры</span></div><div class="tab" style="left:1012px;width:107px"><svg width="16" height="16" viewBox="0 0 16 16" style=""><circle cx="8" cy="8" r="6.800" fill="#fff" stroke="#ee2a2a" stroke-width="1.500"/><circle cx="8" cy="8" r="5.300" fill="none" stroke="#cfcfcf" stroke-width=".8"/>
<path d="M8 8L5.800 3.500L9 4z" fill="#f25a5a"/><path d="M8 8L5.300 4.500M8 8h3.300" stroke="#222" stroke-width="1.200" stroke-linecap="round"/><circle cx="8" cy="8" r="1" fill="#555"/></svg><span style="left:38px">События</span></div><div class="tab" style="left:1119px;width:108px"><svg width="16" height="16" viewBox="0 0 16 16" style=""><path d="M1.200 4.500h2.800c3.200 0 3.800 6 7 6h2M1.200 10.500h2.800c3.200 0 3.800-6 7-6h2" fill="none" stroke="#868a82" stroke-width="2.800"/><path d="M11.500 1.600l3.600 2.900-3.600 2.900zM11.500 7.600l3.600 2.900-3.600 2.900z" fill="#868a82" stroke="#868a82" stroke-width=".8" stroke-linejoin="round"/>
<path d="M1.600 4.500h2.400c3.200 0 3.800 6 7 6h2M1.600 10.500h2.400c3.200 0 3.800-6 7-6h2" fill="none" stroke="#f0f0ec" stroke-width="1"/><path d="M12.300 3.400l1.500 1.100-1.500 1.100zM12.300 9.400l1.500 1.100-1.500 1.100z" fill="#f0f0ec"/></svg><span style="left:38px">Триггеры</span></div><div class="tab" style="left:1227px;width:113px"><svg width="17" height="16" viewBox="0 0 17 16" style=""><path d="M.8 8C3 3.700 6 2.700 8.800 2.700S14.600 4 16.300 8C14.500 12 11.500 13.300 8.700 13.300S2.800 12 .8 8z" fill="#fff" stroke="#e09a68" stroke-width="1.300"/><path d="M1.600 6.600C4 3.600 6.500 3.200 9 3.200" fill="none" stroke="#ecc29f" stroke-width="1.300"/><circle cx="8.500" cy="7.700" r="4" fill="#6d95e4"/><circle cx="9.300" cy="8.200" r="2.200" fill="#8db0f0" opacity=".7"/><rect x="7.400" y="6" width="2.200" height="2.200" rx=".4" fill="#000"/></svg><span style="left:38px">Слежение</span></div><div class="tab act" style="left:1340px;width:109px"><svg width="16" height="16" viewBox="0 0 16 16" style=""><path d="M9 1.500h6v1.500H9zM1 5.500h5.500V7H1zM9 9.500h6V11H9z" fill="#8e8ed6"/>
<path d="M9.500 2.500h5v4h-5zM1.500 6.500h4.500v4H1.500zM9.500 10.500h5v4h-5z" fill="#fff" stroke="#000" stroke-width="1"/><path d="M11 4.500h2M3 8.500h1.500M11 12.500h2" stroke="#000" stroke-width="1"/>
<path d="M6 8.500L9.500 4.500M6 8.500l3.500 4" stroke="#000" stroke-width="1" fill="none"/></svg><span style="left:38px">Дизайнер</span></div><div class="tab" style="left:1449px;width:197.5px"><svg width="16" height="16" viewBox="0 0 16 16" style=""><path d="M5 6L7 2.500h2L11 6" fill="none" stroke="#6f9be0" stroke-width="1.600"/><path d="M6.500 3.500l3 2M9.500 3.500l-3 2" stroke="#9fc0f0" stroke-width=".8"/>
<path d="M.8 6.500h14.400l-1.700 7.500h-11z" fill="#f4f4f4" stroke="#8a8a8a"/><path d="M2 8.500h12M2.500 10.500h11M3 12.500h10M4.500 7v7M6.800 7v7M9.200 7v7M11.500 7v7" stroke="#b4b4b4" stroke-width=".8"/><path d="M.5 6.500h15" stroke="#8a8a8a" stroke-width="1.400"/></svg><span style="left:38px">Центральные столбцы</span></div></div><div id="namepanel"><span class="t">Без названия *</span></div><div id="sidemenu"><div class="sb on" style="top:6px"><svg width="16" height="16" viewBox="0 0 16 16" style=""><path d="M4 13.300L8 5.500l4 7.800" fill="none" stroke="#333" stroke-width="1.500"/></svg></div><div class="sb " style="top:30px"><svg width="16" height="16" viewBox="0 0 16 16" style=""><rect x=".75" y="1.550" width="14.600" height="14.600" rx="1.800" fill="#fff" stroke="#3a3a3a" stroke-width="1.100"/><path d="M3 3.800h4.200L3 8zM13.100 3.800V8L8.900 3.800zM3 13.900V9.700l4.200 4.200zM13.100 13.900H8.900l4.200-4.200z" fill="#2a2a2a"/><path d="M4.200 5l2.700 2.700M11.900 5L9.200 7.700M4.200 12.700l2.700-2.700M11.900 12.700L9.200 10" stroke="#2a2a2a" stroke-width="1.500"/><rect x="7" y="7.800" width="2.100" height="2.100" fill="#bbb" opacity=".6"/></svg></div><div class="sb " style="top:54px"><svg width="16" height="16" viewBox="0 0 16 16" style=""><rect x="1.500" y="2.400" width="13.200" height="13.200" rx="1.200" fill="#fff" stroke="#6f9be0"/><path d="M3 4.500h10.200" stroke="#6db95b"/><path d="M3 7.500h10.200M3 10.500h10.200M3 13.500h10.200M6.500 6v9M10 6v9" stroke="#b9cdf0"/><g transform="translate(.1 .9)"><circle cx="12.500" cy="12.500" r="3.300" fill="#4fa83d" stroke="#2f7d22" stroke-width=".7"/><path d="M10.500 12.500h4M12.500 10.500v4" stroke="#fff" stroke-width="1.200"/></g></svg></div><div class="sb " style="top:78px"><svg width="16" height="16" viewBox="0 0 16 16" style=""><g transform="translate(-.5 1.100) scale(1 1.040)"><defs><linearGradient id="pg" x1="0" y1="0" x2="0" y2="1"><stop offset="0" stop-color="#f4f4f4"/><stop offset="1" stop-color="#c4c4c4"/></linearGradient></defs><path d="M2 .8h7.500l4.300 4.300V15H2z" fill="url(#pg)" stroke="#6e6e6e" stroke-width="1"/><path d="M9.500 .8v4.300h4.300" fill="#fafafa" stroke="#6e6e6e" stroke-width="1" stroke-linejoin="round"/></g><path d="M2.500 12.300h9" stroke="#b4b4b4" stroke-width="1.700"/><g transform="translate(.3 1)"><circle cx="12.500" cy="12.500" r="3.300" fill="#aaa" stroke="#777" stroke-width=".7"/><path d="M10.500 12.500h4M12.500 10.500v4" stroke="#fff" stroke-width="1.200"/></g></svg></div><div class="sb " style="top:102px"><svg width="16" height="16" viewBox="0 0 16 16" style=""><g transform="translate(-.5 1.100) scale(1 1.040)"><defs><linearGradient id="pg" x1="0" y1="0" x2="0" y2="1"><stop offset="0" stop-color="#f4f4f4"/><stop offset="1" stop-color="#c4c4c4"/></linearGradient></defs><path d="M2 .8h7.500l4.300 4.300V15H2z" fill="url(#pg)" stroke="#6e6e6e" stroke-width="1"/><path d="M9.500 .8v4.300h4.300" fill="#fafafa" stroke="#6e6e6e" stroke-width="1" stroke-linejoin="round"/></g><path d="M4.500 12.500l1-3 6.500-6.500 2 2-6.500 6.500z" fill="#f4f4f4" stroke="#777" stroke-width=".9"/><path d="M4.500 12.500l3-1" stroke="#555" stroke-width="1.600"/></svg></div><div class="sb " style="top:126px"><svg width="16" height="16" viewBox="0 0 16 16" style=""><g transform="translate(2,1.5)"><path d="M.5 .5h11.500v12H2L.5 11z" fill="#555" stroke="#333" stroke-width=".8"/><rect x="2.500" y=".8" width="7.500" height="5.700" fill="#eee"/><rect x="3" y="8.500" width="6" height="4" fill="#888"/><rect x="4" y="9.300" width="1.800" height="2.700" fill="#333"/></g></svg></div><div class="sb " style="top:150px"><svg width="16" height="16" viewBox="0 0 16 16" style=""><g transform="translate(0.5,0.3)"><path d="M.5 .5h11.500v12H2L.5 11z" fill="#555" stroke="#333" stroke-width=".8"/><rect x="2.500" y=".8" width="7.500" height="5.700" fill="#eee"/><rect x="3" y="8.500" width="6" height="4" fill="#888"/><rect x="4" y="9.300" width="1.800" height="2.700" fill="#333"/></g><g transform="translate(3.5,3.2)"><path d="M.5 .5h11.500v12H2L.5 11z" fill="#555" stroke="#333" stroke-width=".8"/><rect x="2.500" y=".8" width="7.500" height="5.700" fill="#eee"/><rect x="3" y="8.500" width="6" height="4" fill="#888"/><rect x="4" y="9.300" width="1.800" height="2.700" fill="#333"/></g></svg></div><div class="sb " style="top:174px"><svg width="16" height="16" viewBox="0 0 16 16" style=""><g transform="translate(-.5 1.100) scale(1 1.040)"><defs><linearGradient id="pg" x1="0" y1="0" x2="0" y2="1"><stop offset="0" stop-color="#f4f4f4"/><stop offset="1" stop-color="#c4c4c4"/></linearGradient></defs><path d="M2 .8h7.500l4.300 4.300V15H2z" fill="url(#pg)" stroke="#6e6e6e" stroke-width="1"/><path d="M9.500 .8v4.300h4.300" fill="#fafafa" stroke="#6e6e6e" stroke-width="1" stroke-linejoin="round"/></g><path d="M2.500 12.300h9" stroke="#b4b4b4" stroke-width="1.700"/><circle cx="12.800" cy="13.500" r="3.300" fill="#bbb" stroke="#777" stroke-width=".7"/><path d="M10.800 13.500h4" stroke="#fff" stroke-width="1.200"/></svg></div><div class="sb " style="top:198px"><svg width="16" height="16" viewBox="0 0 16 16" style=""><rect x="2.500" y="1.500" width="11" height="13" fill="#fff" stroke="#333" stroke-width="1.200"/><path d="M2.500 2h11" stroke="#333" stroke-width="1.800"/><path d="M4.500 5.500h7M4.500 7.500h7M4.500 9.500h7M4.500 11.500h7" stroke="#555" stroke-width=".9"/><path d="M4 5.500h1M4 7.500h1M4 9.500h1M4 11.500h1" stroke="#111"/></svg></div><div class="sb " style="top:222px"><svg width="16" height="16" viewBox="0 0 16 16" style=""><path d="M3.500 13V11.500H8V4.500h4" fill="none" stroke="#333" stroke-width="1.900"/><rect x="1.800" y="10.500" width="3.400" height="3.700" fill="#333"/><path d="M14.500 2l-2.500 2.500 2.500 2.500M12 4.500h2.500" fill="none" stroke="#333" stroke-width=".9"/></svg></div><div class="sb " style="top:246px"><svg width="16" height="16" viewBox="0 0 16 16" style=""><path d="M8 5l3 3-3 3-3-3z" fill="#525252"/></svg></div><div class="sb " style="top:270px"><svg width="16" height="16" viewBox="0 0 16 16" style=""><path d="M.8 15c0-6 3-9 8.200-9V1.800l6.600 6.200L9 14.200V10.300c-4 0-6 1.200-8.200 4.700z" fill="#525252"/></svg></div><div class="sb " style="top:294px"><svg width="16" height="16" viewBox="0 0 16 16" style=""><text x="8" y="14" text-anchor="middle" font-family="Liberation Sans,sans-serif" font-weight="bold" font-size="17.500" fill="#525252">?</text></svg></div><div class="sb on" style="top:318px"><svg width="16" height="16" viewBox="0 0 16 16" style=""><path d="M5 4.500h3v8h3.500" fill="none" stroke="#525252" stroke-width="1"/><rect x="3.600" y="3.400" width="2.200" height="2.200" fill="#525252"/><rect x="10.600" y="11.400" width="2.200" height="2.200" fill="#525252"/></svg></div><div class="sb on" style="top:342px"><svg width="16" height="16" viewBox="0 0 16 16" style=""><path d="M6.400 5.100v8M9.800 5.100v8M3.900 7.600h8.300M3.900 10.700h8.300" stroke="#525252" stroke-width="1.200"/></svg></div><div class="sb " style="top:366px"><svg width="16" height="16" viewBox="0 0 16 16" style=""><path d="M5.300 .2h5.800v8.800h5.900L8.100 17-.75 9h6.050z" fill="#525252"/></svg></div><div class="sb " style="top:390px"><svg width="16" height="16" viewBox="0 0 16 16" style=""><path d="M6.300 1.200h4.500v6.900h4.500L8.550 14.300 1.800 8.100h4.500z" fill="#525252"/><path d="M2 15.600h13.200" stroke="#525252" stroke-width="1.100"/></svg></div><div class="sb " style="top:414px"><svg width="16" height="16" viewBox="0 0 16 16" style=""><path d="M4 9.400h8M4.400 7.500v3.800M11.600 7.500v3.800" stroke="#525252" stroke-width="1"/></svg></div><div class="sb " style="top:438px"><svg width="16" height="16" viewBox="0 0 16 16" style=""><path d="M1.500 1.500h7l4 4v9h-11z" fill="#e4e4e4" stroke="#777"/><path d="M8.500 1.500v4h4" fill="#f6f6f6" stroke="#777"/><path d="M4 9.500h9v-1.500l3 3-3 3V12.500H4z" fill="#c8c8c8" stroke="#888" stroke-width=".8"/></svg></div><div class="sb " style="top:462px"><svg width="16" height="16" viewBox="0 0 16 16" style=""><path d="M3.500 4.500l4 3.500-4 3.500M8.500 4.500l4 3.500-4 3.500" fill="none" stroke="#333" stroke-width="1.300"/></svg></div><div class="sb " style="top:486px"><svg width="16" height="16" viewBox="0 0 16 16" style=""><g transform="translate(0 1.300)"><rect x="6.700" y="2" width="2.600" height="2.800" rx=".9" fill="none" stroke="#a6a6a6" stroke-width="1.100"/><path d="M8 5V13.800M5 6.500h6" stroke="#a6a6a6" stroke-width="1.500"/><path d="M2.500 9.800c.7 2.700 2.800 3.900 5.500 3.900s4.800-1.200 5.500-3.900" fill="none" stroke="#a6a6a6" stroke-width="1.700"/><path d="M1.300 11.300l.9-2.900 2.100 1.900zM14.700 11.300l-.9-2.900-2.100 1.900z" fill="#a6a6a6"/></g></svg></div></div><div class="dt" style="left:303px;top:288px;width:181px"><div class="hd"><div class="v">v</div><div class="g"><svg width="14" height="14" viewBox="0 0 16 16" style=""><path d="M8 .3l2.300 2.900h2.800v2.800L15.700 8l-2.600 2v2.800h-2.800L8 15.700l-2.300-2.900H2.900V10L.3 8l2.600-2V3.200h2.800z" fill="#858585" stroke="#6e6e6e" stroke-width=".8" stroke-linejoin="miter"/><path d="M8 2.500l1.600 2h1.900v1.900L13.500 8l-2 1.600v1.900H9.600L8 13.500l-1.600-2H4.500V9.600L2.500 8l2-1.600V4.500h1.900z" fill="none" stroke="#9a9a9a" stroke-width=".7"/><rect x="5.200" y="5.200" width="5.600" height="5.600" rx="1.500" fill="#a3d3f5" stroke="#6e6e6e" stroke-width=".8"/></svg></div><div class="nm">ebookshop <b>books</b></div></div><div class="r"><svg width="10" height="13" viewBox="0 0 10 13" style=""><g transform="translate(.75 1) scale(.84)" style="filter:drop-shadow(1px 1px .6px rgba(0,0,0,.35))"><path d="M4.600 2.200c1.500 0 2.500 1 2.500 2.300 0 1-.5 1.700-1.300 2v.8h1.300v1.100H5.800v.8h1.300v1.400H3.700V6.600C2.800 6.300 2.200 5.500 2.200 4.500c0-1.300 1-2.300 2.400-2.300z" fill="#fdf94a" stroke="#4c4c14" stroke-width=".75"/><circle cx="4.600" cy="4.200" r=".85" fill="#fff" stroke="#3a3a20" stroke-width=".6"/></g></svg><span class="t">id : int(11)</span></div><div class="r p"><svg width="10" height="13" viewBox="0 0 10 13" style=""><g style="filter:drop-shadow(1px 1px .6px rgba(0,0,0,.35))"><rect x="1.500" y="2.600" width="6.400" height="7.800" rx="2.300" fill="#fff" stroke="#808080" stroke-width=".9"/><path d="M3.100 4.600h3.200M3.100 6.500h3.200M3.100 8.400h3.200" stroke="#8a8a8a" stroke-width=".9"/></g></svg><span class="t">book_name : varchar(200)</span></div><div class="r"><svg width="10" height="13" viewBox="0 0 10 13" style=""><g style="filter:drop-shadow(1px 1px .6px rgba(0,0,0,.35))"><rect x="1.500" y="2.600" width="6.400" height="7.800" rx="2.300" fill="#fff" stroke="#808080" stroke-width=".9"/><path d="M3.100 4.600h3.200M3.100 6.500h3.200M3.100 8.400h3.200" stroke="#8a8a8a" stroke-width=".9"/></g></svg><span class="t">description : text</span></div><div class="r e"><svg width="10" height="13" viewBox="0 0 10 13" style=""><g style="filter:drop-shadow(1px 1px .6px rgba(0,0,0,.35))"><rect x="1.500" y="2.600" width="6.400" height="7.800" rx="2.300" fill="#fff" stroke="#808080" stroke-width=".9"/><path d="M3.100 4.600h3.200M3.100 6.500h3.200M3.100 8.400h3.200" stroke="#8a8a8a" stroke-width=".9"/></g></svg><span class="t">author : varchar(200)</span></div><div class="r"><svg width="10" height="13" viewBox="0 0 10 13" style=""><g style="filter:drop-shadow(1px 1px .6px rgba(0,0,0,.35))"><rect x="1.500" y="2.600" width="6.400" height="7.800" rx="2.300" fill="#fff" stroke="#808080" stroke-width=".9"/><path d="M3.100 4.600h3.200M3.100 6.500h3.200M3.100 8.400h3.200" stroke="#8a8a8a" stroke-width=".9"/></g></svg><span class="t">publisher : varchar(200)</span></div><div class="r e"><svg width="10" height="13" viewBox="0 0 10 13" style=""><g style="filter:drop-shadow(1px 1px .6px rgba(0,0,0,.35))"><rect x="1.500" y="2.600" width="6.400" height="7.800" rx="2.300" fill="#fff" stroke="#808080" stroke-width=".9"/><path d="M3.100 4.600h3.200M3.100 6.500h3.200M3.100 8.400h3.200" stroke="#8a8a8a" stroke-width=".9"/></g></svg><span class="t">price : varchar(200)</span></div><div class="r"><svg width="10" height="13" viewBox="0 0 10 13" style=""><path d="M3.800 3.400L3.300 10.800M6.900 3.400L6.400 10.800M1.900 5.600h6.500M1.600 8.600h6.500" stroke="#0000f0" stroke-width="1.400"/></svg><span class="t">quantity : int(11)</span></div><div class="r e"><svg width="10" height="13" viewBox="0 0 10 13" style=""><path d="M3.800 3.400L3.300 10.800M6.900 3.400L6.400 10.800M1.900 5.600h6.500M1.600 8.600h6.500" stroke="#0000f0" stroke-width="1.400"/></svg><span class="t">categoryId : int(11)</span></div><div class="r"><svg width="10" height="13" viewBox="0 0 10 13" style=""><g style="filter:drop-shadow(1px 1px .6px rgba(0,0,0,.35))"><rect x="1.500" y="2.600" width="6.400" height="7.800" rx="2.300" fill="#fff" stroke="#808080" stroke-width=".9"/><path d="M3.100 4.600h3.200M3.100 6.500h3.200M3.100 8.400h3.200" stroke="#8a8a8a" stroke-width=".9"/></g></svg><span class="t">book_image : varchar(200)</span></div><div class="r e"><svg width="10" height="13" viewBox="0 0 10 13" style=""><rect x="1.500" y="3" width="6" height="7.400" fill="#fff" stroke="#222" stroke-width="1"/><path d="M1 2.700h7" stroke="#2a6af0" stroke-width="1.700"/><path d="M3.800 6.200l1-.6V9M3.700 9h2.200" stroke="#000" stroke-width="1" fill="none"/></svg><span class="t">create_date : timestamp</span></div><div class="r"><svg width="10" height="13" viewBox="0 0 10 13" style=""><path d="M3.800 3.400L3.300 10.800M6.900 3.400L6.400 10.800M1.900 5.600h6.500M1.600 8.600h6.500" stroke="#0000f0" stroke-width="1.400"/></svg><span class="t">userId : int(11)</span></div><div class="r e"><svg width="10" height="13" viewBox="0 0 10 13" style=""><g style="filter:drop-shadow(1px 1px .6px rgba(0,0,0,.35))"><path d="M4.700 2.500l3.500 3.500-3.500 3.500L1.200 6z" fill="#55dbe8" stroke="#6f8a8e" stroke-width=".8"/><path d="M3.200 5.200l1.500-1.500" stroke="#dffbff" stroke-width="1.200"/></g></svg><span class="t">status : enum('1','0')</span></div></div><div class="dt" style="left:533px;top:248px;width:160px"><div class="hd"><div class="v">v</div><div class="g"><svg width="14" height="14" viewBox="0 0 16 16" style=""><path d="M8 .3l2.300 2.900h2.800v2.800L15.700 8l-2.600 2v2.800h-2.800L8 15.700l-2.300-2.900H2.900V10L.3 8l2.600-2V3.200h2.800z" fill="#858585" stroke="#6e6e6e" stroke-width=".8" stroke-linejoin="miter"/><path d="M8 2.500l1.600 2h1.900v1.900L13.500 8l-2 1.600v1.900H9.600L8 13.500l-1.600-2H4.500V9.600L2.500 8l2-1.600V4.500h1.900z" fill="none" stroke="#9a9a9a" stroke-width=".7"/><rect x="5.200" y="5.200" width="5.600" height="5.600" rx="1.500" fill="#a3d3f5" stroke="#6e6e6e" stroke-width=".8"/></svg></div><div class="nm">ebookshop <b>category</b></div></div><div class="r"><svg width="10" height="13" viewBox="0 0 10 13" style=""><g transform="translate(.75 1) scale(.84)" style="filter:drop-shadow(1px 1px .6px rgba(0,0,0,.35))"><path d="M4.600 2.200c1.500 0 2.500 1 2.500 2.300 0 1-.5 1.700-1.300 2v.8h1.300v1.100H5.800v.8h1.300v1.400H3.700V6.600C2.800 6.300 2.200 5.500 2.200 4.500c0-1.300 1-2.300 2.400-2.300z" fill="#fdf94a" stroke="#4c4c14" stroke-width=".75"/><circle cx="4.600" cy="4.200" r=".85" fill="#fff" stroke="#3a3a20" stroke-width=".6"/></g></svg><span class="t">id : int(11)</span></div><div class="r p"><svg width="10" height="13" viewBox="0 0 10 13" style=""><g style="filter:drop-shadow(1px 1px .6px rgba(0,0,0,.35))"><rect x="1.500" y="2.600" width="6.400" height="7.800" rx="2.300" fill="#fff" stroke="#808080" stroke-width=".9"/><path d="M3.100 4.600h3.200M3.100 6.500h3.200M3.100 8.400h3.200" stroke="#8a8a8a" stroke-width=".9"/></g></svg><span class="t">category : varchar(100)</span></div><div class="r"><svg width="10" height="13" viewBox="0 0 10 13" style=""><g style="filter:drop-shadow(1px 1px .6px rgba(0,0,0,.35))"><rect x="1.500" y="2.600" width="6.400" height="7.800" rx="2.300" fill="#fff" stroke="#808080" stroke-width=".9"/><path d="M3.100 4.600h3.200M3.100 6.500h3.200M3.100 8.400h3.200" stroke="#8a8a8a" stroke-width=".9"/></g></svg><span class="t">description : text</span></div><div class="r e"><svg width="10" height="13" viewBox="0 0 10 13" style=""><g style="filter:drop-shadow(1px 1px .6px rgba(0,0,0,.35))"><rect x="1.500" y="2.600" width="6.400" height="7.800" rx="2.300" fill="#fff" stroke="#808080" stroke-width=".9"/><path d="M3.100 4.600h3.200M3.100 6.500h3.200M3.100 8.400h3.200" stroke="#8a8a8a" stroke-width=".9"/></g></svg><span class="t">tag : varchar(100)</span></div></div><div class="dt" style="left:533px;top:428px;width:185px"><div class="hd"><div class="v">v</div><div class="g"><svg width="14" height="14" viewBox="0 0 16 16" style=""><path d="M8 .3l2.300 2.900h2.800v2.800L15.700 8l-2.600 2v2.800h-2.800L8 15.700l-2.300-2.900H2.900V10L.3 8l2.600-2V3.200h2.800z" fill="#858585" stroke="#6e6e6e" stroke-width=".8" stroke-linejoin="miter"/><path d="M8 2.500l1.600 2h1.900v1.900L13.500 8l-2 1.600v1.900H9.600L8 13.500l-1.600-2H4.500V9.600L2.500 8l2-1.600V4.500h1.900z" fill="none" stroke="#9a9a9a" stroke-width=".7"/><rect x="5.200" y="5.200" width="5.600" height="5.600" rx="1.500" fill="#a3d3f5" stroke="#6e6e6e" stroke-width=".8"/></svg></div><div class="nm">ebookshop <b>ebooks</b></div></div><div class="r"><svg width="10" height="13" viewBox="0 0 10 13" style=""><g transform="translate(.75 1) scale(.84)" style="filter:drop-shadow(1px 1px .6px rgba(0,0,0,.35))"><path d="M4.600 2.200c1.500 0 2.500 1 2.500 2.300 0 1-.5 1.700-1.300 2v.8h1.300v1.100H5.800v.8h1.300v1.400H3.700V6.600C2.800 6.300 2.200 5.500 2.200 4.500c0-1.300 1-2.300 2.400-2.300z" fill="#fdf94a" stroke="#4c4c14" stroke-width=".75"/><circle cx="4.600" cy="4.200" r=".85" fill="#fff" stroke="#3a3a20" stroke-width=".6"/></g></svg><span class="t">id : int(11)</span></div><div class="r p"><svg width="10" height="13" viewBox="0 0 10 13" style=""><g style="filter:drop-shadow(1px 1px .6px rgba(0,0,0,.35))"><rect x="1.500" y="2.600" width="6.400" height="7.800" rx="2.300" fill="#fff" stroke="#808080" stroke-width=".9"/><path d="M3.100 4.600h3.200M3.100 6.500h3.200M3.100 8.400h3.200" stroke="#8a8a8a" stroke-width=".9"/></g></svg><span class="t">ebook_name : varchar(200)</span></div><div class="r"><svg width="10" height="13" viewBox="0 0 10 13" style=""><g style="filter:drop-shadow(1px 1px .6px rgba(0,0,0,.35))"><rect x="1.500" y="2.600" width="6.400" height="7.800" rx="2.300" fill="#fff" stroke="#808080" stroke-width=".9"/><path d="M3.100 4.600h3.200M3.100 6.500h3.200M3.100 8.400h3.200" stroke="#8a8a8a" stroke-width=".9"/></g></svg><span class="t">description : text</span></div><div class="r e"><svg width="10" height="13" viewBox="0 0 10 13" style=""><g style="filter:drop-shadow(1px 1px .6px rgba(0,0,0,.35))"><rect x="1.500" y="2.600" width="6.400" height="7.800" rx="2.300" fill="#fff" stroke="#808080" stroke-width=".9"/><path d="M3.100 4.600h3.200M3.100 6.500h3.200M3.100 8.400h3.200" stroke="#8a8a8a" stroke-width=".9"/></g></svg><span class="t">author : varchar(200)</span></div><div class="r"><svg width="10" height="13" viewBox="0 0 10 13" style=""><g style="filter:drop-shadow(1px 1px .6px rgba(0,0,0,.35))"><rect x="1.500" y="2.600" width="6.400" height="7.800" rx="2.300" fill="#fff" stroke="#808080" stroke-width=".9"/><path d="M3.100 4.600h3.200M3.100 6.500h3.200M3.100 8.400h3.200" stroke="#8a8a8a" stroke-width=".9"/></g></svg><span class="t">book_file : varchar(500)</span></div><div class="r e"><svg width="10" height="13" viewBox="0 0 10 13" style=""><g style="filter:drop-shadow(1px 1px .6px rgba(0,0,0,.35))"><rect x="1.500" y="2.600" width="6.400" height="7.800" rx="2.300" fill="#fff" stroke="#808080" stroke-width=".9"/><path d="M3.100 4.600h3.200M3.100 6.500h3.200M3.100 8.400h3.200" stroke="#8a8a8a" stroke-width=".9"/></g></svg><span class="t">book_image : varchar(500)</span></div><div class="r"><svg width="10" height="13" viewBox="0 0 10 13" style=""><path d="M3.800 3.400L3.300 10.800M6.900 3.400L6.400 10.800M1.900 5.600h6.500M1.600 8.600h6.500" stroke="#0000f0" stroke-width="1.400"/></svg><span class="t">categoryId : int(11)</span></div><div class="r e"><svg width="10" height="13" viewBox="0 0 10 13" style=""><rect x="1.500" y="3" width="6" height="7.400" fill="#fff" stroke="#222" stroke-width="1"/><path d="M1 2.700h7" stroke="#2a6af0" stroke-width="1.700"/><path d="M3.800 6.200l1-.6V9M3.700 9h2.200" stroke="#000" stroke-width="1" fill="none"/></svg><span class="t">dateTime : timestamp</span></div></div><div class="dt" style="left:803px;top:318px;width:170px"><div class="hd"><div class="v">v</div><div class="g"><svg width="14" height="14" viewBox="0 0 16 16" style=""><path d="M8 .3l2.300 2.900h2.800v2.800L15.700 8l-2.600 2v2.800h-2.800L8 15.700l-2.300-2.900H2.900V10L.3 8l2.600-2V3.200h2.800z" fill="#858585" stroke="#6e6e6e" stroke-width=".8" stroke-linejoin="miter"/><path d="M8 2.500l1.600 2h1.900v1.900L13.500 8l-2 1.600v1.900H9.600L8 13.500l-1.600-2H4.500V9.600L2.500 8l2-1.600V4.500h1.900z" fill="none" stroke="#9a9a9a" stroke-width=".7"/><rect x="5.200" y="5.200" width="5.600" height="5.600" rx="1.500" fill="#a3d3f5" stroke="#6e6e6e" stroke-width=".8"/></svg></div><div class="nm">ebookshop <b>orders</b></div></div><div class="r"><svg width="10" height="13" viewBox="0 0 10 13" style=""><g transform="translate(.75 1) scale(.84)" style="filter:drop-shadow(1px 1px .6px rgba(0,0,0,.35))"><path d="M4.600 2.200c1.500 0 2.500 1 2.500 2.300 0 1-.5 1.700-1.300 2v.8h1.300v1.100H5.800v.8h1.300v1.400H3.700V6.600C2.800 6.300 2.200 5.500 2.200 4.500c0-1.300 1-2.300 2.400-2.300z" fill="#fdf94a" stroke="#4c4c14" stroke-width=".75"/><circle cx="4.600" cy="4.200" r=".85" fill="#fff" stroke="#3a3a20" stroke-width=".6"/></g></svg><span class="t">orderId : int(11)</span></div><div class="r e"><svg width="10" height="13" viewBox="0 0 10 13" style=""><path d="M3.800 3.400L3.300 10.800M6.900 3.400L6.400 10.800M1.900 5.600h6.500M1.600 8.600h6.500" stroke="#0000f0" stroke-width="1.400"/></svg><span class="t">userId : int(11)</span></div><div class="r p"><svg width="10" height="13" viewBox="0 0 10 13" style=""><g style="filter:drop-shadow(1px 1px .6px rgba(0,0,0,.35))"><rect x="1.500" y="2.600" width="6.400" height="7.800" rx="2.300" fill="#fff" stroke="#808080" stroke-width=".9"/><path d="M3.100 4.600h3.200M3.100 6.500h3.200M3.100 8.400h3.200" stroke="#8a8a8a" stroke-width=".9"/></g></svg><span class="t">name : varchar(200)</span></div><div class="r e"><svg width="10" height="13" viewBox="0 0 10 13" style=""><g style="filter:drop-shadow(1px 1px .6px rgba(0,0,0,.35))"><rect x="1.500" y="2.600" width="6.400" height="7.800" rx="2.300" fill="#fff" stroke="#808080" stroke-width=".9"/><path d="M3.100 4.600h3.200M3.100 6.500h3.200M3.100 8.400h3.200" stroke="#8a8a8a" stroke-width=".9"/></g></svg><span class="t">email : varchar(200)</span></div><div class="r"><svg width="10" height="13" viewBox="0 0 10 13" style=""><g style="filter:drop-shadow(1px 1px .6px rgba(0,0,0,.35))"><rect x="1.500" y="2.600" width="6.400" height="7.800" rx="2.300" fill="#fff" stroke="#808080" stroke-width=".9"/><path d="M3.100 4.600h3.200M3.100 6.500h3.200M3.100 8.400h3.200" stroke="#8a8a8a" stroke-width=".9"/></g></svg><span class="t">contact : varchar(200)</span></div><div class="r e"><svg width="10" height="13" viewBox="0 0 10 13" style=""><g style="filter:drop-shadow(1px 1px .6px rgba(0,0,0,.35))"><rect x="1.500" y="2.600" width="6.400" height="7.800" rx="2.300" fill="#fff" stroke="#808080" stroke-width=".9"/><path d="M3.100 4.600h3.200M3.100 6.500h3.200M3.100 8.400h3.200" stroke="#8a8a8a" stroke-width=".9"/></g></svg><span class="t">address : text</span></div><div class="r"><svg width="10" height="13" viewBox="0 0 10 13" style=""><g style="filter:drop-shadow(1px 1px .6px rgba(0,0,0,.35))"><rect x="1.500" y="2.600" width="6.400" height="7.800" rx="2.300" fill="#fff" stroke="#808080" stroke-width=".9"/><path d="M3.100 4.600h3.200M3.100 6.500h3.200M3.100 8.400h3.200" stroke="#8a8a8a" stroke-width=".9"/></g></svg><span class="t">city : varchar(200)</span></div><div class="r e"><svg width="10" height="13" viewBox="0 0 10 13" style=""><g style="filter:drop-shadow(1px 1px .6px rgba(0,0,0,.35))"><rect x="1.500" y="2.600" width="6.400" height="7.800" rx="2.300" fill="#fff" stroke="#808080" stroke-width=".9"/><path d="M3.100 4.600h3.200M3.100 6.500h3.200M3.100 8.400h3.200" stroke="#8a8a8a" stroke-width=".9"/></g></svg><span class="t">zipcode : varchar(200)</span></div><div class="r"><svg width="10" height="13" viewBox="0 0 10 13" style=""><g style="filter:drop-shadow(1px 1px .6px rgba(0,0,0,.35))"><rect x="1.500" y="2.600" width="6.400" height="7.800" rx="2.300" fill="#fff" stroke="#808080" stroke-width=".9"/><path d="M3.100 4.600h3.200M3.100 6.500h3.200M3.100 8.400h3.200" stroke="#8a8a8a" stroke-width=".9"/></g></svg><span class="t">total_price : varchar(200)</span></div><div class="r e"><svg width="10" height="13" viewBox="0 0 10 13" style=""><path d="M3.800 3.400L3.300 10.800M6.900 3.400L6.400 10.800M1.900 5.600h6.500M1.600 8.600h6.500" stroke="#0000f0" stroke-width="1.400"/></svg><span class="t">paymentcheck : int(11)</span></div><div class="r"><svg width="10" height="13" viewBox="0 0 10 13" style=""><rect x="1.500" y="3" width="6" height="7.400" fill="#fff" stroke="#222" stroke-width="1"/><path d="M1 2.700h7" stroke="#2a6af0" stroke-width="1.700"/><path d="M3.800 6.200l1-.6V9M3.700 9h2.200" stroke="#000" stroke-width="1" fill="none"/></svg><span class="t">dateTime : timestamp</span></div><div class="r e"><svg width="10" height="13" viewBox="0 0 10 13" style=""><g style="filter:drop-shadow(1px 1px .6px rgba(0,0,0,.35))"><rect x="1.500" y="2.600" width="6.400" height="7.800" rx="2.300" fill="#fff" stroke="#808080" stroke-width=".9"/><path d="M3.100 4.600h3.200M3.100 6.500h3.200M3.100 8.400h3.200" stroke="#8a8a8a" stroke-width=".9"/></g></svg><span class="t">bookId : text</span></div><div class="r"><svg width="10" height="13" viewBox="0 0 10 13" style=""><g style="filter:drop-shadow(1px 1px .6px rgba(0,0,0,.35))"><rect x="1.500" y="2.600" width="6.400" height="7.800" rx="2.300" fill="#fff" stroke="#808080" stroke-width=".9"/><path d="M3.100 4.600h3.200M3.100 6.500h3.200M3.100 8.400h3.200" stroke="#8a8a8a" stroke-width=".9"/></g></svg><span class="t">quantity : text</span></div><div class="r e"><svg width="10" height="13" viewBox="0 0 10 13" style=""><g style="filter:drop-shadow(1px 1px .6px rgba(0,0,0,.35))"><path d="M4.700 2.500l3.500 3.500-3.500 3.500L1.200 6z" fill="#55dbe8" stroke="#6f8a8e" stroke-width=".8"/><path d="M3.200 5.200l1.500-1.500" stroke="#dffbff" stroke-width="1.200"/></g></svg><span class="t">status : enum('1','0')</span></div></div><div class="dt" style="left:1063px;top:278px;width:180px"><div class="hd"><div class="v">v</div><div class="g"><svg width="14" height="14" viewBox="0 0 16 16" style=""><path d="M8 .3l2.300 2.900h2.800v2.800L15.700 8l-2.600 2v2.800h-2.800L8 15.700l-2.300-2.900H2.900V10L.3 8l2.600-2V3.200h2.800z" fill="#858585" stroke="#6e6e6e" stroke-width=".8" stroke-linejoin="miter"/><path d="M8 2.500l1.600 2h1.900v1.900L13.500 8l-2 1.600v1.900H9.600L8 13.500l-1.600-2H4.500V9.600L2.500 8l2-1.600V4.500h1.900z" fill="none" stroke="#9a9a9a" stroke-width=".7"/><rect x="5.200" y="5.200" width="5.600" height="5.600" rx="1.500" fill="#a3d3f5" stroke="#6e6e6e" stroke-width=".8"/></svg></div><div class="nm">ebookshop <b>order_items</b></div></div><div class="r"><svg width="10" height="13" viewBox="0 0 10 13" style=""><g transform="translate(.75 1) scale(.84)" style="filter:drop-shadow(1px 1px .6px rgba(0,0,0,.35))"><path d="M4.600 2.200c1.500 0 2.500 1 2.500 2.300 0 1-.5 1.700-1.300 2v.8h1.300v1.100H5.800v.8h1.300v1.400H3.700V6.600C2.800 6.300 2.200 5.500 2.200 4.500c0-1.300 1-2.300 2.400-2.300z" fill="#fdf94a" stroke="#4c4c14" stroke-width=".75"/><circle cx="4.600" cy="4.200" r=".85" fill="#fff" stroke="#3a3a20" stroke-width=".6"/></g></svg><span class="t">id : int(11)</span></div><div class="r e"><svg width="10" height="13" viewBox="0 0 10 13" style=""><path d="M3.800 3.400L3.300 10.800M6.900 3.400L6.400 10.800M1.900 5.600h6.500M1.600 8.600h6.500" stroke="#0000f0" stroke-width="1.400"/></svg><span class="t">orderId : int(11)</span></div><div class="r"><svg width="10" height="13" viewBox="0 0 10 13" style=""><path d="M3.800 3.400L3.300 10.800M6.900 3.400L6.400 10.800M1.900 5.600h6.500M1.600 8.600h6.500" stroke="#0000f0" stroke-width="1.400"/></svg><span class="t">bookId : int(11)</span></div><div class="r p"><svg width="10" height="13" viewBox="0 0 10 13" style=""><g style="filter:drop-shadow(1px 1px .6px rgba(0,0,0,.35))"><rect x="1.500" y="2.600" width="6.400" height="7.800" rx="2.300" fill="#fff" stroke="#808080" stroke-width=".9"/><path d="M3.100 4.600h3.200M3.100 6.500h3.200M3.100 8.400h3.200" stroke="#8a8a8a" stroke-width=".9"/></g></svg><span class="t">price : varchar(200)</span></div><div class="r"><svg width="10" height="13" viewBox="0 0 10 13" style=""><path d="M3.800 3.400L3.300 10.800M6.900 3.400L6.400 10.800M1.900 5.600h6.500M1.600 8.600h6.500" stroke="#0000f0" stroke-width="1.400"/></svg><span class="t">quantity : int(11)</span></div></div><div class="dt" style="left:1073px;top:498px;width:153px"><div class="hd"><div class="v">v</div><div class="g"><svg width="14" height="14" viewBox="0 0 16 16" style=""><path d="M8 .3l2.300 2.900h2.800v2.800L15.700 8l-2.600 2v2.800h-2.800L8 15.700l-2.300-2.900H2.900V10L.3 8l2.600-2V3.200h2.800z" fill="#858585" stroke="#6e6e6e" stroke-width=".8" stroke-linejoin="miter"/><path d="M8 2.500l1.600 2h1.900v1.900L13.500 8l-2 1.600v1.900H9.600L8 13.500l-1.600-2H4.500V9.600L2.500 8l2-1.600V4.500h1.900z" fill="none" stroke="#9a9a9a" stroke-width=".7"/><rect x="5.200" y="5.200" width="5.600" height="5.600" rx="1.500" fill="#a3d3f5" stroke="#6e6e6e" stroke-width=".8"/></svg></div><div class="nm">ebookshop <b>reviews</b></div></div><div class="r"><svg width="10" height="13" viewBox="0 0 10 13" style=""><g transform="translate(.75 1) scale(.84)" style="filter:drop-shadow(1px 1px .6px rgba(0,0,0,.35))"><path d="M4.600 2.200c1.500 0 2.500 1 2.500 2.300 0 1-.5 1.700-1.300 2v.8h1.300v1.100H5.800v.8h1.300v1.400H3.700V6.600C2.800 6.300 2.200 5.500 2.200 4.500c0-1.300 1-2.300 2.400-2.300z" fill="#fdf94a" stroke="#4c4c14" stroke-width=".75"/><circle cx="4.600" cy="4.200" r=".85" fill="#fff" stroke="#3a3a20" stroke-width=".6"/></g></svg><span class="t">id : int(11)</span></div><div class="r p"><svg width="10" height="13" viewBox="0 0 10 13" style=""><g style="filter:drop-shadow(1px 1px .6px rgba(0,0,0,.35))"><rect x="1.500" y="2.600" width="6.400" height="7.800" rx="2.300" fill="#fff" stroke="#808080" stroke-width=".9"/><path d="M3.100 4.600h3.200M3.100 6.500h3.200M3.100 8.400h3.200" stroke="#8a8a8a" stroke-width=".9"/></g></svg><span class="t">review : text</span></div><div class="r"><svg width="10" height="13" viewBox="0 0 10 13" style=""><path d="M3.800 3.400L3.300 10.800M6.900 3.400L6.400 10.800M1.900 5.600h6.500M1.600 8.600h6.500" stroke="#0000f0" stroke-width="1.400"/></svg><span class="t">bookId : int(11)</span></div><div class="r e"><svg width="10" height="13" viewBox="0 0 10 13" style=""><path d="M3.800 3.400L3.300 10.800M6.900 3.400L6.400 10.800M1.900 5.600h6.500M1.600 8.600h6.500" stroke="#0000f0" stroke-width="1.400"/></svg><span class="t">userId : int(11)</span></div><div class="r"><svg width="10" height="13" viewBox="0 0 10 13" style=""><rect x="1.500" y="3" width="6" height="7.400" fill="#fff" stroke="#222" stroke-width="1"/><path d="M1 2.700h7" stroke="#2a6af0" stroke-width="1.700"/><path d="M3.800 6.200l1-.6V9M3.700 9h2.200" stroke="#000" stroke-width="1" fill="none"/></svg><span class="t">dateTime : timestamp</span></div></div><div class="dt" style="left:1333px;top:348px;width:165px"><div class="hd"><div class="v">v</div><div class="g"><svg width="14" height="14" viewBox="0 0 16 16" style=""><path d="M8 .3l2.300 2.900h2.800v2.800L15.700 8l-2.600 2v2.800h-2.800L8 15.700l-2.300-2.900H2.900V10L.3 8l2.600-2V3.200h2.800z" fill="#858585" stroke="#6e6e6e" stroke-width=".8" stroke-linejoin="miter"/><path d="M8 2.500l1.600 2h1.900v1.900L13.500 8l-2 1.600v1.900H9.600L8 13.500l-1.600-2H4.500V9.600L2.500 8l2-1.600V4.500h1.900z" fill="none" stroke="#9a9a9a" stroke-width=".7"/><rect x="5.200" y="5.200" width="5.600" height="5.600" rx="1.500" fill="#a3d3f5" stroke="#6e6e6e" stroke-width=".8"/></svg></div><div class="nm">ebookshop <b>users</b></div></div><div class="r"><svg width="10" height="13" viewBox="0 0 10 13" style=""><g transform="translate(.75 1) scale(.84)" style="filter:drop-shadow(1px 1px .6px rgba(0,0,0,.35))"><path d="M4.600 2.200c1.500 0 2.500 1 2.500 2.300 0 1-.5 1.700-1.300 2v.8h1.300v1.100H5.800v.8h1.300v1.400H3.700V6.600C2.800 6.300 2.200 5.500 2.200 4.500c0-1.300 1-2.300 2.400-2.300z" fill="#fdf94a" stroke="#4c4c14" stroke-width=".75"/><circle cx="4.600" cy="4.200" r=".85" fill="#fff" stroke="#3a3a20" stroke-width=".6"/></g></svg><span class="t">id : int(11)</span></div><div class="r p"><svg width="10" height="13" viewBox="0 0 10 13" style=""><g style="filter:drop-shadow(1px 1px .6px rgba(0,0,0,.35))"><rect x="1.500" y="2.600" width="6.400" height="7.800" rx="2.300" fill="#fff" stroke="#808080" stroke-width=".9"/><path d="M3.100 4.600h3.200M3.100 6.500h3.200M3.100 8.400h3.200" stroke="#8a8a8a" stroke-width=".9"/></g></svg><span class="t">name : varchar(200)</span></div><div class="r"><svg width="10" height="13" viewBox="0 0 10 13" style=""><g style="filter:drop-shadow(1px 1px .6px rgba(0,0,0,.35))"><rect x="1.500" y="2.600" width="6.400" height="7.800" rx="2.300" fill="#fff" stroke="#808080" stroke-width=".9"/><path d="M3.100 4.600h3.200M3.100 6.500h3.200M3.100 8.400h3.200" stroke="#8a8a8a" stroke-width=".9"/></g></svg><span class="t">contact : varchar(50)</span></div><div class="r e"><svg width="10" height="13" viewBox="0 0 10 13" style=""><g transform="translate(.75 1) scale(.84)" style="filter:drop-shadow(1px 1px .6px rgba(0,0,0,.35))"><path d="M4.600 2.200c1.500 0 2.500 1 2.500 2.300 0 1-.5 1.700-1.300 2v.8h1.300v1.100H5.800v.8h1.300v1.400H3.700V6.600C2.800 6.300 2.200 5.500 2.200 4.500c0-1.300 1-2.300 2.400-2.300z" fill="#fdf94a" stroke="#4c4c14" stroke-width=".75"/><circle cx="4.600" cy="4.200" r=".85" fill="#fff" stroke="#3a3a20" stroke-width=".6"/></g></svg><span class="t">email : varchar(100)</span></div><div class="r"><svg width="10" height="13" viewBox="0 0 10 13" style=""><g style="filter:drop-shadow(1px 1px .6px rgba(0,0,0,.35))"><rect x="1.500" y="2.600" width="6.400" height="7.800" rx="2.300" fill="#fff" stroke="#808080" stroke-width=".9"/><path d="M3.100 4.600h3.200M3.100 6.500h3.200M3.100 8.400h3.200" stroke="#8a8a8a" stroke-width=".9"/></g></svg><span class="t">password : varchar(255)</span></div><div class="r e"><svg width="10" height="13" viewBox="0 0 10 13" style=""><g style="filter:drop-shadow(1px 1px .6px rgba(0,0,0,.35))"><rect x="1.500" y="2.600" width="6.400" height="7.800" rx="2.300" fill="#fff" stroke="#808080" stroke-width=".9"/><path d="M3.100 4.600h3.200M3.100 6.500h3.200M3.100 8.400h3.200" stroke="#8a8a8a" stroke-width=".9"/></g></svg><span class="t">address : varchar(500)</span></div><div class="r"><svg width="10" height="13" viewBox="0 0 10 13" style=""><g style="filter:drop-shadow(1px 1px .6px rgba(0,0,0,.35))"><rect x="1.500" y="2.600" width="6.400" height="7.800" rx="2.300" fill="#fff" stroke="#808080" stroke-width=".9"/><path d="M3.100 4.600h3.200M3.100 6.500h3.200M3.100 8.400h3.200" stroke="#8a8a8a" stroke-width=".9"/></g></svg><span class="t">city : varchar(50)</span></div><div class="r e"><svg width="10" height="13" viewBox="0 0 10 13" style=""><g style="filter:drop-shadow(1px 1px .6px rgba(0,0,0,.35))"><rect x="1.500" y="2.600" width="6.400" height="7.800" rx="2.300" fill="#fff" stroke="#808080" stroke-width=".9"/><path d="M3.100 4.600h3.200M3.100 6.500h3.200M3.100 8.400h3.200" stroke="#8a8a8a" stroke-width=".9"/></g></svg><span class="t">type : varchar(20)</span></div><div class="r"><svg width="10" height="13" viewBox="0 0 10 13" style=""><rect x="1.500" y="3" width="6" height="7.400" fill="#fff" stroke="#222" stroke-width="1"/><path d="M1 2.700h7" stroke="#2a6af0" stroke-width="1.700"/><path d="M3.800 6.200l1-.6V9M3.700 9h2.200" stroke="#000" stroke-width="1" fill="none"/></svg><span class="t">createdate : timestamp</span></div></div><div id="layer"><div class="abs" style="left:80px;top:1px"><svg width="18" height="19" viewBox="0 0 18 19" style=""><path d="M6 0h5.900v8.700h6.100L9 18.500 0 8.700h6z" fill="#555"/></svg></div><div class="abs" style="left:104px;top:0px"><svg width="18" height="19" viewBox="0 0 18 19" style=""><path d="M6 0h5.900v5h5.900L12.950 9.900h4.850L8.900 18.900 0 9.900h4.850L0 5h6z" fill="#555"/></svg></div><div class="lrow" style="top:20px"><div class="abs" style="left:1px;top:3px"><svg width="16" height="16" viewBox="0 0 16 16" style=""><g transform="translate(8 8) rotate(-32) scale(1 .8) translate(-8 -8)"><path d="M8 1l1.600 1.400 2.100-.4.700 2 2 .7-.400 2.100L15.400 8 14 9.600l.400 2.100-2 .7-.700 2-2.100-.4L8 15.400 6.400 14l-2.100.4-.700-2-2-.7.400-2.100L.6 8 2 6.400l-.400-2.100 2-.7.700-2 2.100.4z" fill="#6a6a6a" transform="translate(.2 1.300)"/><path d="M8 1l1.600 1.400 2.100-.4.700 2 2 .7-.400 2.100L15.400 8 14 9.600l.400 2.100-2 .7-.700 2-2.100-.4L8 15.400 6.400 14l-2.100.4-.700-2-2-.7.400-2.100L.6 8 2 6.400l-.400-2.100 2-.7.700-2 2.100.4z" fill="#9c9c9c" stroke="#7a7a7a" stroke-width=".6"/><circle cx="8" cy="8.600" r="3.500" fill="#6e6e6e"/><circle cx="8" cy="8" r="3.400" fill="#eaeef0"/></g></svg></div><div class="cb"><svg width="13" height="13" viewBox="0 0 13 13" style=""><path d="M2.800 6.800l2.600 2.600L10.400 3.800" fill="none" stroke="#fff" stroke-width="2.100"/></svg></div><div class="lname"><span class="t">ebookshop.books</span></div></div><div class="lrow" style="top:42px"><div class="abs" style="left:1px;top:3px"><svg width="16" height="16" viewBox="0 0 16 16" style=""><g transform="translate(8 8) rotate(-32) scale(1 .8) translate(-8 -8)"><path d="M8 1l1.600 1.400 2.100-.4.700 2 2 .7-.400 2.100L15.400 8 14 9.600l.400 2.100-2 .7-.700 2-2.100-.4L8 15.400 6.400 14l-2.100.4-.700-2-2-.7.400-2.100L.6 8 2 6.400l-.400-2.100 2-.7.700-2 2.100.4z" fill="#6a6a6a" transform="translate(.2 1.300)"/><path d="M8 1l1.600 1.400 2.100-.4.700 2 2 .7-.400 2.100L15.400 8 14 9.600l.400 2.100-2 .7-.700 2-2.100-.4L8 15.400 6.400 14l-2.100.4-.700-2-2-.7.400-2.100L.6 8 2 6.400l-.400-2.100 2-.7.700-2 2.100.4z" fill="#9c9c9c" stroke="#7a7a7a" stroke-width=".6"/><circle cx="8" cy="8.600" r="3.500" fill="#6e6e6e"/><circle cx="8" cy="8" r="3.400" fill="#eaeef0"/></g></svg></div><div class="cb"><svg width="13" height="13" viewBox="0 0 13 13" style=""><path d="M2.800 6.800l2.600 2.600L10.400 3.800" fill="none" stroke="#fff" stroke-width="2.100"/></svg></div><div class="lname"><span class="t">ebookshop.category</span></div></div><div class="lrow" style="top:64px"><div class="abs" style="left:1px;top:3px"><svg width="16" height="16" viewBox="0 0 16 16" style=""><g transform="translate(8 8) rotate(-32) scale(1 .8) translate(-8 -8)"><path d="M8 1l1.600 1.400 2.100-.4.700 2 2 .7-.400 2.100L15.400 8 14 9.600l.400 2.100-2 .7-.700 2-2.100-.4L8 15.400 6.400 14l-2.100.4-.700-2-2-.7.400-2.100L.6 8 2 6.400l-.400-2.100 2-.7.700-2 2.100.4z" fill="#6a6a6a" transform="translate(.2 1.300)"/><path d="M8 1l1.600 1.400 2.100-.4.700 2 2 .7-.400 2.100L15.400 8 14 9.600l.400 2.100-2 .7-.700 2-2.100-.4L8 15.400 6.400 14l-2.100.4-.700-2-2-.7.400-2.100L.6 8 2 6.400l-.400-2.100 2-.7.700-2 2.100.4z" fill="#9c9c9c" stroke="#7a7a7a" stroke-width=".6"/><circle cx="8" cy="8.600" r="3.500" fill="#6e6e6e"/><circle cx="8" cy="8" r="3.400" fill="#eaeef0"/></g></svg></div><div class="cb"><svg width="13" height="13" viewBox="0 0 13 13" style=""><path d="M2.800 6.800l2.600 2.600L10.400 3.800" fill="none" stroke="#fff" stroke-width="2.100"/></svg></div><div class="lname"><span class="t">ebookshop.ebooks</span></div></div><div class="lrow" style="top:86px"><div class="abs" style="left:1px;top:3px"><svg width="16" height="16" viewBox="0 0 16 16" style=""><g transform="translate(8 8) rotate(-32) scale(1 .8) translate(-8 -8)"><path d="M8 1l1.600 1.400 2.100-.4.700 2 2 .7-.400 2.100L15.400 8 14 9.600l.400 2.100-2 .7-.700 2-2.100-.4L8 15.400 6.400 14l-2.100.4-.700-2-2-.7.400-2.100L.6 8 2 6.400l-.400-2.100 2-.7.700-2 2.100.4z" fill="#6a6a6a" transform="translate(.2 1.300)"/><path d="M8 1l1.600 1.400 2.100-.4.700 2 2 .7-.400 2.100L15.400 8 14 9.600l.400 2.100-2 .7-.700 2-2.100-.4L8 15.400 6.400 14l-2.100.4-.700-2-2-.7.400-2.100L.6 8 2 6.400l-.400-2.100 2-.7.700-2 2.100.4z" fill="#9c9c9c" stroke="#7a7a7a" stroke-width=".6"/><circle cx="8" cy="8.600" r="3.500" fill="#6e6e6e"/><circle cx="8" cy="8" r="3.400" fill="#eaeef0"/></g></svg></div><div class="cb"><svg width="13" height="13" viewBox="0 0 13 13" style=""><path d="M2.800 6.800l2.600 2.600L10.400 3.800" fill="none" stroke="#fff" stroke-width="2.100"/></svg></div><div class="lname"><span class="t">ebookshop.orders</span></div></div><div class="lrow" style="top:108px"><div class="abs" style="left:1px;top:3px"><svg width="16" height="16" viewBox="0 0 16 16" style=""><g transform="translate(8 8) rotate(-32) scale(1 .8) translate(-8 -8)"><path d="M8 1l1.600 1.400 2.100-.4.700 2 2 .7-.400 2.100L15.400 8 14 9.600l.400 2.100-2 .7-.700 2-2.100-.4L8 15.400 6.400 14l-2.100.4-.700-2-2-.7.400-2.100L.6 8 2 6.400l-.400-2.100 2-.7.700-2 2.100.4z" fill="#6a6a6a" transform="translate(.2 1.300)"/><path d="M8 1l1.600 1.400 2.100-.4.700 2 2 .7-.400 2.100L15.400 8 14 9.600l.400 2.100-2 .7-.700 2-2.100-.4L8 15.400 6.400 14l-2.100.4-.700-2-2-.7.400-2.100L.6 8 2 6.400l-.400-2.100 2-.7.700-2 2.100.4z" fill="#9c9c9c" stroke="#7a7a7a" stroke-width=".6"/><circle cx="8" cy="8.600" r="3.500" fill="#6e6e6e"/><circle cx="8" cy="8" r="3.400" fill="#eaeef0"/></g></svg></div><div class="cb"><svg width="13" height="13" viewBox="0 0 13 13" style=""><path d="M2.800 6.800l2.600 2.600L10.400 3.800" fill="none" stroke="#fff" stroke-width="2.100"/></svg></div><div class="lname"><span class="t">ebookshop.order_items</span></div></div><div class="lrow" style="top:130px"><div class="abs" style="left:1px;top:3px"><svg width="16" height="16" viewBox="0 0 16 16" style=""><g transform="translate(8 8) rotate(-32) scale(1 .8) translate(-8 -8)"><path d="M8 1l1.600 1.400 2.100-.4.700 2 2 .7-.400 2.100L15.400 8 14 9.600l.400 2.100-2 .7-.700 2-2.100-.4L8 15.400 6.400 14l-2.100.4-.700-2-2-.7.400-2.100L.6 8 2 6.400l-.400-2.100 2-.7.700-2 2.100.4z" fill="#6a6a6a" transform="translate(.2 1.300)"/><path d="M8 1l1.600 1.400 2.100-.4.700 2 2 .7-.400 2.100L15.400 8 14 9.600l.400 2.100-2 .7-.700 2-2.100-.4L8 15.400 6.400 14l-2.100.4-.700-2-2-.7.400-2.100L.6 8 2 6.400l-.400-2.100 2-.7.700-2 2.100.4z" fill="#9c9c9c" stroke="#7a7a7a" stroke-width=".6"/><circle cx="8" cy="8.600" r="3.500" fill="#6e6e6e"/><circle cx="8" cy="8" r="3.400" fill="#eaeef0"/></g></svg></div><div class="cb"><svg width="13" height="13" viewBox="0 0 13 13" style=""><path d="M2.800 6.800l2.600 2.600L10.400 3.800" fill="none" stroke="#fff" stroke-width="2.100"/></svg></div><div class="lname"><span class="t">ebookshop.reviews</span></div></div><div class="lrow" style="top:152px"><div class="abs" style="left:1px;top:3px"><svg width="16" height="16" viewBox="0 0 16 16" style=""><g transform="translate(8 8) rotate(-32) scale(1 .8) translate(-8 -8)"><path d="M8 1l1.600 1.400 2.100-.4.700 2 2 .7-.400 2.100L15.400 8 14 9.600l.400 2.100-2 .7-.700 2-2.100-.4L8 15.400 6.400 14l-2.100.4-.700-2-2-.7.400-2.100L.6 8 2 6.400l-.400-2.100 2-.7.700-2 2.100.4z" fill="#6a6a6a" transform="translate(.2 1.300)"/><path d="M8 1l1.600 1.400 2.100-.4.700 2 2 .7-.400 2.100L15.400 8 14 9.600l.400 2.100-2 .7-.700 2-2.100-.4L8 15.400 6.400 14l-2.100.4-.700-2-2-.7.400-2.100L.6 8 2 6.400l-.400-2.100 2-.7.700-2 2.100.4z" fill="#9c9c9c" stroke="#7a7a7a" stroke-width=".6"/><circle cx="8" cy="8.600" r="3.500" fill="#6e6e6e"/><circle cx="8" cy="8" r="3.400" fill="#eaeef0"/></g></svg></div><div class="cb"><svg width="13" height="13" viewBox="0 0 13 13" style=""><path d="M2.800 6.800l2.600 2.600L10.400 3.800" fill="none" stroke="#fff" stroke-width="2.100"/></svg></div><div class="lname"><span class="t">ebookshop.users</span></div></div><div class="abs" style="left:0;top:522px;width:201px;text-align:center;line-height:16px"><span class="t">Количество таблиц: 7</span></div><div class="abs" style="left:3px;top:543px"><svg width="11" height="10" viewBox="0 0 11 10" style=""><path d="M1 2h1M1 5h1M4 5h1M1 8h1M4 8h1M7 8h1" stroke="#000" stroke-width="1.500"/><path d="M2.500 3.500h1M2.500 6.500h1M5.500 6.500h1M8.500 9.500h1" stroke="#666" stroke-width="1"/></svg></div></div><div id="console"><div class="abs" style="left:8px;top:4px"><svg width="14" height="14" viewBox="0 0 14 14" style=""><defs><linearGradient id="cg" x1="1" y1="0" x2="0" y2="1"><stop offset="0" stop-color="#6a6a6a"/><stop offset=".5" stop-color="#2a2a2a"/><stop offset="1" stop-color="#1c1c1c"/></linearGradient></defs><rect x=".5" y=".5" width="13" height="13" rx="1.200" fill="#fff" stroke="#bdbdbd" stroke-width=".8"/><rect x="2" y="4" width="10" height="8" fill="url(#cg)"/></svg></div><div class="abs" style="left:26px;top:0"><span class="t">Консоль</span></div></div><div id="wm1">Активация Windows</div><div id="wm2">Чтобы активировать Windows, перейдите в раздел "Параметры".</div></body></html>
